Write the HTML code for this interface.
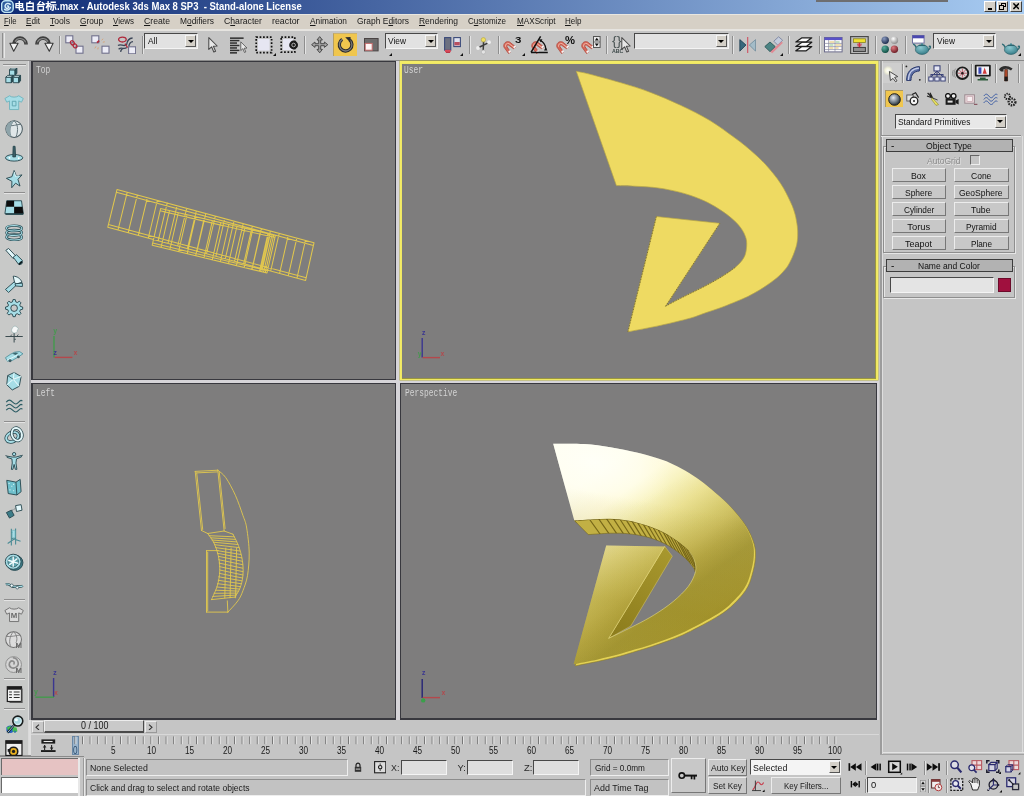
<!DOCTYPE html>
<html><head><meta charset="utf-8"><title>3ds Max</title>
<style>
html,body{margin:0;padding:0}
body{width:1024px;height:796px;position:relative;overflow:hidden;background:#c5c5c5;font-family:"Liberation Sans",sans-serif;font-size:9px;color:#111;line-height:1}
div,span,svg{position:absolute;box-sizing:border-box}
.t{white-space:nowrap;transform-origin:0 50%}
.sunk{background:#e2e2e2;border-top:1.6px solid #484848;border-left:1.6px solid #484848;border-bottom:1px solid #f4f4f4;border-right:1px solid #f4f4f4}
.btn{background:#c8c8c8;border-top:1px solid #ececec;border-left:1px solid #ececec;border-bottom:1.5px solid #777;border-right:1.5px solid #777}
.fld{background:#c2c2c2;border-top:1px solid #8c8c8c;border-left:1px solid #8c8c8c;border-bottom:1px solid #eee;border-right:1px solid #eee}
.dd{background:#d4d0c8;border-top:1px solid #f4f4f4;border-left:1px solid #f4f4f4;border-bottom:1px solid #555;border-right:1px solid #555}
.dd:after{content:"";position:absolute;left:50%;top:50%;margin-left:-3px;margin-top:-1.5px;border-left:3px solid transparent;border-right:3px solid transparent;border-top:3.5px solid #000}
.sep{width:1px;background:#8e8e8e;box-shadow:1px 0 0 #e4e4e4}
.hsep{height:1px;background:#8e8e8e;box-shadow:0 1px 0 #e4e4e4}
.vp{background:#7e7d7d}
.vl{font-family:"Liberation Mono",monospace;font-size:10px;line-height:10px;color:#d2d2d2;transform:scaleX(0.79);transform-origin:0 0}
.cb{text-align:center}
</style></head><body><div id="root" style="left:0;top:0;width:1024px;height:796px;will-change:transform;overflow:hidden">
<div class="" style="left:0px;top:0px;width:1024px;height:14px;background:linear-gradient(90deg,#0e2a74 0%,#a8ccf2 100%);"></div>
<div class="" style="left:816px;top:0px;width:132px;height:2.2px;background:#6e6e70;"></div>
<svg style="left:1px;top:0px;" width="13" height="13" viewBox="0 0 13 13"><rect x="0.6" y="0.8" width="11.6" height="11.6" rx="4" fill="#2c5a9c" stroke="#bfe4f4" stroke-width="1.5"/>
<path d="M9.2 4.3 C7.5 2.9 4.6 3.4 4.1 5.6 C3.7 7.6 5.6 8.6 7 8 C8.2 7.4 7.8 5.8 6.4 6.1 M3.6 9.3 C5.4 10.6 8.6 10.2 9.4 7.6" fill="none" stroke="#d8eefa" stroke-width="1.5" stroke-linecap="round"/></svg>
<svg style="left:15.4px;top:1.2px;" width="42" height="10" viewBox="0 0 42 10"><g fill="none" stroke="#fff" stroke-width="1.35" stroke-linecap="square">
<path d="M1 2.6H7.6V6.6H1Z M1 4.6H7.6 M4.3 0.3V8.2Q4.3 9.3 5.6 9.3H8.6V8"/>
<g transform="translate(10.6,0)"><path d="M4.6 0.2L3.6 1.9 M1.2 2.2H7.6V9.2H1.2Z M1.2 5.6H7.6"/></g>
<g transform="translate(21.2,0)"><path d="M4.2 0.2L1.6 3.6L7.8 3.3 M6.2 1.6L8.2 3.6 M1.8 5.4H7.2V9.2H1.8Z"/></g>
<g transform="translate(31,0)"><path d="M0.2 2.6H4 M2.1 0.2V9.6 M2.1 3.4L0.3 6.6 M2.3 3.8L3.8 5.6 M5.2 1.2H9.2 M4.6 3.9H9.9 M7.3 4V8.6Q7.3 9.4 6.2 9.2 M5.4 5.8L4.7 8.2 M9 5.8L9.8 8.2"/></g>
</g></svg>
<span class="t" style="left:57.00px;top:1.90px;font-size:10.2px;line-height:10.2px;height:10.2px;color:#fff;font-weight:bold;transform:scaleX(0.9308);">.max - Autodesk 3ds Max 8 SP3&nbsp; - Stand-alone License</span>
<div class="" style="left:984px;top:1px;width:11.5px;height:10.5px;background:#d4d0c8;border-top:1px solid #fff;border-left:1px solid #fff;border-bottom:1px solid #404040;border-right:1px solid #404040;"><div style="left:2.5px;top:6px;width:4.5px;height:1.6px;background:#000"></div></div>
<div class="" style="left:996.5px;top:1px;width:11.5px;height:10.5px;background:#d4d0c8;border-top:1px solid #fff;border-left:1px solid #fff;border-bottom:1px solid #404040;border-right:1px solid #404040;"><div style="left:3.6px;top:1.2px;width:4.6px;height:4.2px;border:1px solid #000;border-top-width:1.6px"></div><div style="left:1.6px;top:3.4px;width:4.6px;height:4.4px;border:1px solid #000;border-top-width:1.6px;background:#d4d0c8"></div></div>
<div class="" style="left:1010px;top:1px;width:11.5px;height:10.5px;background:#d4d0c8;border-top:1px solid #fff;border-left:1px solid #fff;border-bottom:1px solid #404040;border-right:1px solid #404040;"><svg style="left:2px;top:1.4px;" width="6.4" height="6.4" viewBox="0 0 6.4 6.4"><path d="M0.4 0.4L6 6M6 0.4L0.4 6" stroke="#000" stroke-width="1.5"/></svg></div>
<div class="" style="left:0px;top:14px;width:1024px;height:16px;background:#d6d0c6;border-top:1px solid #e8e6e0;"></div>
<div class="" style="left:0px;top:29.4px;width:1024px;height:1.2px;background:#e6e4e0;"></div>
<span class="t" style="left:4.00px;top:17.45px;font-size:9.3px;line-height:9.3px;height:9.3px;color:#1a1a1a;transform:scaleX(0.8341);"><u>F</u>ile</span>
<span class="t" style="left:26.00px;top:17.45px;font-size:9.3px;line-height:9.3px;height:9.3px;color:#1a1a1a;transform:scaleX(0.8736);"><u>E</u>dit</span>
<span class="t" style="left:50.00px;top:17.45px;font-size:9.3px;line-height:9.3px;height:9.3px;color:#1a1a1a;transform:scaleX(0.9212);"><u>T</u>ools</span>
<span class="t" style="left:80.00px;top:17.45px;font-size:9.3px;line-height:9.3px;height:9.3px;color:#1a1a1a;transform:scaleX(0.8898);"><u>G</u>roup</span>
<span class="t" style="left:113.00px;top:17.45px;font-size:9.3px;line-height:9.3px;height:9.3px;color:#1a1a1a;transform:scaleX(0.8523);"><u>V</u>iews</span>
<span class="t" style="left:144.00px;top:17.45px;font-size:9.3px;line-height:9.3px;height:9.3px;color:#1a1a1a;transform:scaleX(0.9314);"><u>C</u>reate</span>
<span class="t" style="left:180.00px;top:17.45px;font-size:9.3px;line-height:9.3px;height:9.3px;color:#1a1a1a;transform:scaleX(0.9012);">M<u>o</u>difiers</span>
<span class="t" style="left:224.00px;top:17.45px;font-size:9.3px;line-height:9.3px;height:9.3px;color:#1a1a1a;transform:scaleX(0.9306);">C<u>h</u>aracter</span>
<span class="t" style="left:272.00px;top:17.45px;font-size:9.3px;line-height:9.3px;height:9.3px;color:#1a1a1a;transform:scaleX(0.9501);">reactor</span>
<span class="t" style="left:310.00px;top:17.45px;font-size:9.3px;line-height:9.3px;height:9.3px;color:#1a1a1a;transform:scaleX(0.8947);"><u>A</u>nimation</span>
<span class="t" style="left:357.00px;top:17.45px;font-size:9.3px;line-height:9.3px;height:9.3px;color:#1a1a1a;transform:scaleX(0.9063);">Graph E<u>d</u>itors</span>
<span class="t" style="left:418.50px;top:17.45px;font-size:9.3px;line-height:9.3px;height:9.3px;color:#1a1a1a;transform:scaleX(0.9088);"><u>R</u>endering</span>
<span class="t" style="left:467.50px;top:17.45px;font-size:9.3px;line-height:9.3px;height:9.3px;color:#1a1a1a;transform:scaleX(0.8650);">C<u>u</u>stomize</span>
<span class="t" style="left:516.50px;top:17.45px;font-size:9.3px;line-height:9.3px;height:9.3px;color:#1a1a1a;transform:scaleX(0.8764);"><u>M</u>AXScript</span>
<span class="t" style="left:564.50px;top:17.45px;font-size:9.3px;line-height:9.3px;height:9.3px;color:#1a1a1a;transform:scaleX(0.8626);"><u>H</u>elp</span>
<div class="" style="left:0px;top:30.5px;width:1024px;height:29.5px;background:#c5c5c5;"></div>
<div class="" style="left:0px;top:59.6px;width:1024px;height:1.2px;background:#8a8a8a;"></div>
<div class="" style="left:2.2px;top:33px;width:1.1px;height:25px;background:#8e8e8e;"></div>
<div class="" style="left:3.7px;top:33px;width:1.1px;height:25px;background:#e8e8e8;"></div>
<div class="sep" style="left:59px;top:36px;width:1px;height:18px;"></div>
<div class="sep" style="left:141.5px;top:36px;width:1px;height:18px;"></div>
<div class="sep" style="left:304.4px;top:36px;width:1px;height:18px;"></div>
<div class="sep" style="left:468.6px;top:36px;width:1px;height:18px;"></div>
<div class="sep" style="left:498.3px;top:36px;width:1px;height:18px;"></div>
<div class="sep" style="left:606px;top:36px;width:1px;height:18px;"></div>
<div class="sep" style="left:732.4px;top:36px;width:1px;height:18px;"></div>
<div class="sep" style="left:788.4px;top:36px;width:1px;height:18px;"></div>
<div class="sep" style="left:819.2px;top:36px;width:1px;height:18px;"></div>
<div class="sep" style="left:875.2px;top:36px;width:1px;height:18px;"></div>
<div class="sep" style="left:905px;top:36px;width:1px;height:18px;"></div>
<div class="sunk" style="left:144px;top:33.2px;width:54px;height:15.6px;"></div><div class="dd" style="left:185.4px;top:35px;width:11px;height:12.2px;"></div><span class="t" style="left:147.60px;top:36.95px;font-size:9.3px;line-height:9.3px;height:9.3px;color:#111;transform:scaleX(0.9);">All</span>
<div class="sunk" style="left:384.5px;top:33.2px;width:53.5px;height:15.6px;"></div><div class="dd" style="left:425.4px;top:35px;width:11px;height:12.2px;"></div><span class="t" style="left:388.10px;top:36.95px;font-size:9.3px;line-height:9.3px;height:9.3px;color:#111;transform:scaleX(0.9);">View</span>
<div class="sunk" style="left:634px;top:33.2px;width:94.5px;height:15.6px;"></div><div class="dd" style="left:715.9px;top:35px;width:11px;height:12.2px;"></div>
<div class="sunk" style="left:933.3px;top:33.2px;width:62.5px;height:15.6px;"></div><div class="dd" style="left:983.2px;top:35px;width:11px;height:12.2px;"></div><span class="t" style="left:936.90px;top:36.95px;font-size:9.3px;line-height:9.3px;height:9.3px;color:#111;transform:scaleX(0.9);">View</span>
<svg style="left:272.6px;top:52.6px;" width="3" height="3" viewBox="0 0 3 3"><path d="M3 0V3H0Z" fill="#111"/></svg>
<svg style="left:389.1px;top:52.6px;" width="3" height="3" viewBox="0 0 3 3"><path d="M3 0V3H0Z" fill="#111"/></svg>
<svg style="left:459.6px;top:52.6px;" width="3" height="3" viewBox="0 0 3 3"><path d="M3 0V3H0Z" fill="#111"/></svg>
<svg style="left:522.1px;top:52.6px;" width="3" height="3" viewBox="0 0 3 3"><path d="M3 0V3H0Z" fill="#111"/></svg>
<svg style="left:780.1px;top:52.6px;" width="3" height="3" viewBox="0 0 3 3"><path d="M3 0V3H0Z" fill="#111"/></svg>
<svg style="left:1018.1px;top:52.6px;" width="3" height="3" viewBox="0 0 3 3"><path d="M3 0V3H0Z" fill="#111"/></svg>
<svg style="left:9px;top:35px;" width="20" height="18" viewBox="0 0 20 18"><path d="M17 8.600A6.100 6.100 0 0 0 4.900 8.400" fill="none" stroke="#3e3e3e" stroke-width="3.600"/><path d="M16.600 7.400A5.800 5.800 0 0 0 6 6.600" fill="none" stroke="#8c8c8c" stroke-width="1.200"/><path d="M0.900 8.300H9.100L4.700 16.200Z" fill="#f2f2f2" stroke="#3a3a3a" stroke-width="1.100" stroke-linejoin="round"/><path d="M15.200 8.200h3.600v1.400h-3.600z" fill="#3e3e3e"/></svg>
<svg style="left:33.8px;top:35px;" width="20" height="18" viewBox="0 0 20 18"><g transform="translate(20,0) scale(-1,1)"><path d="M17 8.600A6.100 6.100 0 0 0 4.900 8.400" fill="none" stroke="#3e3e3e" stroke-width="3.600"/><path d="M16.600 7.400A5.800 5.800 0 0 0 6 6.600" fill="none" stroke="#8c8c8c" stroke-width="1.200"/><path d="M0.900 8.300H9.100L4.700 16.200Z" fill="#f2f2f2" stroke="#3a3a3a" stroke-width="1.100" stroke-linejoin="round"/><path d="M15.200 8.200h3.600v1.400h-3.600z" fill="#3e3e3e"/></g></svg>
<svg style="left:65.4px;top:35.2px;" width="19" height="19" viewBox="0 0 19 19"><rect x="0.8" y="0.8" width="7" height="7" fill="#ececf6" stroke="#70708c" stroke-width="1.1"/><rect x="11" y="11.2" width="7" height="7" fill="#ececf6" stroke="#70708c" stroke-width="1.1"/><ellipse cx="7.4" cy="7.8" rx="1.7" ry="2.3" transform="rotate(-35 7.4 7.8)" fill="none" stroke="#b0283a" stroke-width="1.3"/><ellipse cx="10" cy="10.8" rx="1.7" ry="2.3" transform="rotate(-35 10 10.8)" fill="none" stroke="#b0283a" stroke-width="1.3"/></svg>
<svg style="left:90.8px;top:35.2px;" width="19" height="19" viewBox="0 0 19 19"><rect x="0.8" y="0.8" width="7" height="7" fill="#ececf6" stroke="#70708c" stroke-width="1.1"/><rect x="11" y="11.2" width="7" height="7" fill="#ececf6" stroke="#70708c" stroke-width="1.1"/><path d="M6 7.6 L8.2 5.6" stroke="#b0283a" stroke-width="1.6"/><path d="M10.6 5.2l1.6-1.4M11.8 7.2l2-.4M5 11.4l-1.2 2M7.2 12.4l-.4 2" stroke="#d8a070" stroke-width="0.9"/></svg>
<svg style="left:117.4px;top:35.2px;" width="19" height="19" viewBox="0 0 19 19"><path d="M1 10.6C4 8.2 6.6 12.4 9.6 9.6 M1.6 14.2C4.8 11.2 6.4 15.2 9.8 12.6 M9.6 9.6C10.2 5.2 12 3.2 15.6 3 M11.8 11.6C12.2 8.2 13.4 6.8 16 6.6 M3.6 16.8C4 14.6 5 13.6 6.6 13.4" fill="none" stroke="#3c4658" stroke-width="1.3"/><ellipse cx="5.4" cy="4.6" rx="3.8" ry="2.4" fill="none" stroke="#b0283a" stroke-width="1.3"/><path d="M8 8.6l2.6 4" stroke="#b0283a" stroke-width="1.2"/><rect x="11.6" y="11.8" width="7" height="7" fill="#ececf6" stroke="#70708c" stroke-width="1.1"/></svg>
<svg style="left:207.6px;top:37px;" width="10.5" height="16.5" viewBox="0 0 10.5 16.5"><path d="M0.8 0.6 L0.8 12.4 L3.6 9.8 L5.8 15 L7.6 14.2 L5.4 9.2 L9.2 9 Z" fill="#e8e8e8" stroke="#4a4a4a" stroke-width="1.05" stroke-linejoin="round"/></svg>
<svg style="left:229.6px;top:37px;" width="17.5" height="17.5" viewBox="0 0 17.5 17.5"><rect x="0" y="0.4" width="13.6" height="1.5" fill="#2e2e2e"/><rect x="0" y="2.85" width="9.4" height="1.5" fill="#2e2e2e"/><rect x="0" y="5.3" width="7" height="1.5" fill="#2e2e2e"/><rect x="0" y="7.75" width="9.4" height="1.5" fill="#2e2e2e"/><rect x="0" y="10.2" width="7" height="1.5" fill="#2e2e2e"/><rect x="0" y="12.65" width="9.4" height="1.5" fill="#2e2e2e"/><rect x="0" y="15.1" width="7" height="1.5" fill="#2e2e2e"/><g transform="translate(10.2,4.4) scale(0.74)"><path d="M0.8 0.6 L0.8 12.4 L3.6 9.8 L5.8 15 L7.6 14.2 L5.4 9.2 L9.2 9 Z" fill="#e8e8e8" stroke="#4a4a4a" stroke-width="1.05" stroke-linejoin="round"/></g></svg>
<svg style="left:254.6px;top:35.6px;" width="18.5" height="18.5" viewBox="0 0 18.5 18.5"><rect x="3" y="3" width="11.6" height="11.6" fill="#e6e6f2"/><rect x="1.2" y="1.2" width="15.4" height="15.4" fill="none" stroke="#111" stroke-width="1.7" stroke-dasharray="1.7 1.72"/></svg>
<svg style="left:280.4px;top:36.2px;" width="19" height="18" viewBox="0 0 19 18"><rect x="3" y="3" width="10" height="11" fill="#e6e6f2"/><rect x="1.2" y="1.2" width="13.6" height="15" fill="none" stroke="#111" stroke-width="1.7" stroke-dasharray="1.7 1.72"/><circle cx="13.6" cy="9" r="4.4" fill="#1a1a1a"/><circle cx="13.6" cy="9" r="1.8" fill="none" stroke="#bbb" stroke-width="0.9"/></svg>
<svg style="left:311px;top:36px;" width="17.4" height="17.4" viewBox="0 0 17.4 17.4"><path d="M8.7 0.6L11.4 4H9.7V7.7H13.4V6L16.8 8.7L13.4 11.4V9.7H9.7V13.4H11.4L8.7 16.8L6 13.4H7.7V9.7H4V11.4L0.6 8.7L4 6V7.7H7.7V4H6Z" fill="#a4a4a4" stroke="#4a4a4a" stroke-width="1" stroke-linejoin="round"/></svg>
<div class="" style="left:333px;top:33.4px;width:24px;height:22.6px;background:#f0c64e;border-left:1px solid #b8a060;border-top:1px solid #c8b070;"></div>
<svg style="left:336.6px;top:36.4px;" width="17" height="17" viewBox="0 0 17 17"><path d="M5.2 3.4 A6.3 6.3 0 1 0 12.6 3.8" fill="none" stroke="#2c2c2c" stroke-width="3.3"/><path d="M5.2 3.4 A6.3 6.3 0 1 0 12.6 3.8" fill="none" stroke="#7a7a7a" stroke-width="1.3"/><path d="M8.2 1.2L13.6 1L13.4 6.6Z" fill="#2c2c2c"/></svg>
<svg style="left:363.6px;top:38px;" width="15" height="13.6" viewBox="0 0 15 13.6"><rect x="0.5" y="0.5" width="13.6" height="12.4" fill="#6e6c6c" stroke="#4a4444" stroke-width="1"/><rect x="1.2" y="5.4" width="7" height="6.8" fill="#fdf4f4" stroke="#c46a6a" stroke-width="1"/></svg>
<svg style="left:444.2px;top:37px;" width="17.6" height="16.6" viewBox="0 0 17.6 16.6"><rect x="0.6" y="0.6" width="6.2" height="12.6" fill="#6c7080" stroke="#3a4a7a" stroke-width="1.1"/><rect x="9.8" y="0.6" width="6.6" height="9" fill="#dfe2ee" stroke="#3a4a7a" stroke-width="1.1"/><rect x="10.4" y="5" width="5.4" height="3.4" fill="#b85060"/><path d="M1 12.8h5.8v2.4h-5.8z" fill="#d84a5a"/><path d="M2 15.4h4" stroke="#b83848" stroke-width="1.2"/></svg>
<svg style="left:475.6px;top:36.6px;" width="15.6" height="18" viewBox="0 0 15.6 18"><path d="M7.6 3.6L7.2 14 M1.6 11L13.2 5.4" stroke="#3c3c3c" stroke-width="1.5"/><circle cx="7.4" cy="2.8" r="2.2" fill="#f0e060" stroke="#b0a040" stroke-width="0.6"/><circle cx="13" cy="5.2" r="1.9" fill="#eee"/><circle cx="2" cy="11" r="1.9" fill="#eee"/><circle cx="7.4" cy="15" r="2.1" fill="#e4e4e4" stroke="#aaa" stroke-width="0.5"/></svg>
<svg style="left:503.4px;top:40px;" width="14" height="14.4" viewBox="0 0 14 14.4"><path d="M1 7.2 C-0.2 3.4 3.2 0.6 6.6 2 L12.6 6.8 L10.6 8.8 L5.6 5.2 C4.2 4.6 3.4 5.6 4 6.8 L7.6 12 L5.6 13.6 Z" fill="#d8685a" stroke="#b04a3e" stroke-width="0.8" stroke-linejoin="round"/><path d="M2.6 6.8C2 4.2 4 2.8 6 3.6L11.4 7.8" fill="none" stroke="#f0b4a4" stroke-width="1"/><path d="M5.2 11.6l1.9-1.5 1 1.5-2 1.6zM10.2 7l1.9-1.8 1 1.2-2 2z" fill="#f4f4f4"/></svg>
<span class="t" style="left:515.00px;top:35.05px;font-size:9.5px;line-height:9.5px;height:9.5px;color:#111;font-weight:bold;transform:scaleX(1.2113);">3</span>
<svg style="left:531px;top:40px;" width="14" height="14.4" viewBox="0 0 14 14.4"><path d="M1 7.2 C-0.2 3.4 3.2 0.6 6.6 2 L12.6 6.8 L10.6 8.8 L5.6 5.2 C4.2 4.6 3.4 5.6 4 6.8 L7.6 12 L5.6 13.6 Z" fill="#d8685a" stroke="#b04a3e" stroke-width="0.8" stroke-linejoin="round"/><path d="M2.6 6.8C2 4.2 4 2.8 6 3.6L11.4 7.8" fill="none" stroke="#f0b4a4" stroke-width="1"/><path d="M5.2 11.6l1.9-1.5 1 1.5-2 1.6zM10.2 7l1.9-1.8 1 1.2-2 2z" fill="#f4f4f4"/></svg>
<svg style="left:529.4px;top:35.4px;" width="20" height="19" viewBox="0 0 20 19"><path d="M2 17.4H18.8 M2 17.4L11.6 1.4" stroke="#111" stroke-width="1.5" fill="none"/><path d="M11 5.4C14.6 7 16.6 10.4 16.8 14" fill="none" stroke="#111" stroke-width="1.2"/><path d="M9.6 4.4l3.8-.2-1.4 3zM15 15.6l3.4-.2-1.6-3.2z" fill="#111"/></svg>
<svg style="left:555.6px;top:40px;" width="14" height="14.4" viewBox="0 0 14 14.4"><path d="M1 7.2 C-0.2 3.4 3.2 0.6 6.6 2 L12.6 6.8 L10.6 8.8 L5.6 5.2 C4.2 4.6 3.4 5.6 4 6.8 L7.6 12 L5.6 13.6 Z" fill="#d8685a" stroke="#b04a3e" stroke-width="0.8" stroke-linejoin="round"/><path d="M2.6 6.8C2 4.2 4 2.8 6 3.6L11.4 7.8" fill="none" stroke="#f0b4a4" stroke-width="1"/><path d="M5.2 11.6l1.9-1.5 1 1.5-2 1.6zM10.2 7l1.9-1.8 1 1.2-2 2z" fill="#f4f4f4"/></svg>
<span class="t" style="left:565.00px;top:34.75px;font-size:10.5px;line-height:10.5px;height:10.5px;color:#111;font-weight:bold;transform:scaleX(1.0711);">%</span>
<svg style="left:581px;top:40px;" width="14" height="14.4" viewBox="0 0 14 14.4"><path d="M1 7.2 C-0.2 3.4 3.2 0.6 6.6 2 L12.6 6.8 L10.6 8.8 L5.6 5.2 C4.2 4.6 3.4 5.6 4 6.8 L7.6 12 L5.6 13.6 Z" fill="#d8685a" stroke="#b04a3e" stroke-width="0.8" stroke-linejoin="round"/><path d="M2.6 6.8C2 4.2 4 2.8 6 3.6L11.4 7.8" fill="none" stroke="#f0b4a4" stroke-width="1"/><path d="M5.2 11.6l1.9-1.5 1 1.5-2 1.6zM10.2 7l1.9-1.8 1 1.2-2 2z" fill="#f4f4f4"/></svg>
<svg style="left:592.6px;top:35.6px;" width="8" height="12.4" viewBox="0 0 8 12.4"><rect x="0.5" y="0.5" width="6.6" height="11" fill="#e8e8e8" stroke="#555" stroke-width="1"/><path d="M0.5 6H7" stroke="#555" stroke-width="0.9"/><path d="M1.8 4.4L3.8 1.8L5.8 4.4ZM1.8 7.6L3.8 10.2L5.8 7.6Z" fill="#111"/></svg>
<span class="t" style="left:611.80px;top:35.20px;font-size:12px;line-height:12px;height:12px;color:#4c5656;transform:scaleX(1.1977);">{}</span>
<span class="t" style="left:611.60px;top:49.00px;font-size:5.6px;line-height:5.6px;height:5.6px;color:#3c4848;font-weight:bold;transform:scaleX(0.9396);">ABC</span>
<svg style="left:621.4px;top:36.6px;" width="10.5" height="16.5" viewBox="0 0 10.5 16.5"><path d="M0.8 0.6 L0.8 12.4 L3.6 9.8 L5.8 15 L7.6 14.2 L5.4 9.2 L9.2 9 Z" fill="#e8e8e8" stroke="#4a4a4a" stroke-width="1.05" stroke-linejoin="round"/></svg>
<svg style="left:739px;top:37px;" width="17.4" height="16.4" viewBox="0 0 17.4 16.4"><path d="M0.8 2.6L7 8L0.8 14.2Z" fill="#38687c" stroke="#1e3e50" stroke-width="0.8"/><path d="M16.6 2.6L10.4 8L16.6 14.2Z" fill="#a4bcc8" stroke="#6e8a9a" stroke-width="0.8"/><path d="M8.7 0V16.4" stroke="#d05060" stroke-width="1.1"/></svg>
<svg style="left:764.4px;top:35.6px;" width="19.4" height="18.6" viewBox="0 0 19.4 18.6"><path d="M9.8 5.2L14.6 0.8L18.6 4.2L13.8 9.2Z" fill="#c4ccdc" stroke="#7c84a0" stroke-width="0.9"/><path d="M9.4 12.4L17.8 5.6L18.8 7L8.2 17.2L6 15.6Z" fill="#e08a94"/><path d="M0.8 10.6L6 6L11.2 10.6L6 15.6Z" fill="#4c8484" stroke="#2c5858" stroke-width="0.9"/></svg>
<svg style="left:795.2px;top:37px;" width="18" height="15.4" viewBox="0 0 18 15.4"><path d="M0.8 13.8L7 9.6H16.8L11.2 13.8H4.6Z" fill="#fbfbfb" stroke="#1c1c1c" stroke-width="1.25" stroke-linejoin="round"/><path d="M0.8 9.4L7 5.2H16.8L11.2 9.4H4.6Z" fill="#fbfbfb" stroke="#1c1c1c" stroke-width="1.25" stroke-linejoin="round"/><path d="M0.8 5L7 0.8H16.8L11.2 5H4.6Z" fill="#fbfbfb" stroke="#1c1c1c" stroke-width="1.25" stroke-linejoin="round"/></svg>
<svg style="left:824px;top:37.4px;" width="18.6" height="15.4" viewBox="0 0 18.6 15.4"><rect x="0.5" y="0.5" width="17.6" height="14.4" fill="#fff" stroke="#6a6a8a" stroke-width="1"/><rect x="0.5" y="0.5" width="17.6" height="2.6" fill="#5a52c8"/><path d="M4.6 3V15M0.5 6.4H18M0.5 9.6H18M0.5 12.6H18M11 3V15" stroke="#8a8aa0" stroke-width="0.7"/><path d="M5.4 5h5M11.6 8h5.6M5.4 11h4M11.6 11h3" stroke="#e4c060" stroke-width="1.1"/><path d="M5.4 8h4M11.6 5h4" stroke="#88c488" stroke-width="1.1"/></svg>
<svg style="left:850.4px;top:36px;" width="19" height="18.4" viewBox="0 0 19 18.4"><rect x="0.6" y="0.6" width="17.6" height="17" fill="#c0c0c0" stroke="#4a4a4a" stroke-width="1.2"/><rect x="3.4" y="2.8" width="12" height="3.6" fill="#f0e030" stroke="#8a8420" stroke-width="0.8"/><rect x="3.4" y="11.4" width="12" height="4.2" fill="#8e8e8e" stroke="#333" stroke-width="0.9"/><path d="M9.4 6.6V11.2" stroke="#d03040" stroke-width="1.3"/><path d="M7 8.2h4.8M7.4 9.8h4" stroke="#d03040" stroke-width="0.9"/></svg>
<svg style="left:881px;top:36.4px;" width="18.6" height="17.6" viewBox="0 0 18.6 17.6"><radialGradient id="g4242" cx="35%" cy="30%" r="75%"><stop offset="0" stop-color="#8a9ac0"/><stop offset="1" stop-color="#1c2a4a"/></radialGradient><circle cx="4.2" cy="4.2" r="3.7" fill="url(#g4242)"/><radialGradient id="g13442" cx="35%" cy="30%" r="75%"><stop offset="0" stop-color="#ffffff"/><stop offset="1" stop-color="#8a8a8a"/></radialGradient><circle cx="13.4" cy="4.2" r="3.7" fill="url(#g13442)"/><radialGradient id="g42132" cx="35%" cy="30%" r="75%"><stop offset="0" stop-color="#5ab0a0"/><stop offset="1" stop-color="#0e4a40"/></radialGradient><circle cx="4.2" cy="13.2" r="3.7" fill="url(#g42132)"/><radialGradient id="g134132" cx="35%" cy="30%" r="75%"><stop offset="0" stop-color="#e07a80"/><stop offset="1" stop-color="#6a1c24"/></radialGradient><circle cx="13.4" cy="13.2" r="3.7" fill="url(#g134132)"/></svg>
<svg style="left:911.6px;top:34.6px;" width="13" height="9" viewBox="0 0 13 9"><rect x="0.5" y="0.5" width="11.6" height="7.6" fill="#fff" stroke="#7070a0" stroke-width="1"/><rect x="0.5" y="0.5" width="11.6" height="2.8" fill="#4a48b0"/></svg>
<svg style="left:911.6px;top:42.6px;" width="20" height="12" viewBox="0 0 20 12"><radialGradient id="tpg" cx="40%" cy="30%" r="80%"><stop offset="0" stop-color="#8cc8d0"/><stop offset="1" stop-color="#2c7480"/></radialGradient><path d="M1 1.4C2.4 1 3.4 2.6 4.4 4.6 M16.8 3.6C18.8 2 19.4 5.6 15.6 7.4" fill="none" stroke="#2c6a74" stroke-width="1.5"/><ellipse cx="10" cy="6.6" rx="6.6" ry="4.8" fill="url(#tpg)" stroke="#2a5e68" stroke-width="0.7"/><path d="M6.8 2.4H13.2" stroke="#2a5e68" stroke-width="1"/><circle cx="10" cy="1.2" r="1" fill="#3c8490"/></svg>
<svg style="left:1001px;top:42.6px;" width="20" height="12" viewBox="0 0 20 12"><radialGradient id="tpg" cx="40%" cy="30%" r="80%"><stop offset="0" stop-color="#8cc8d0"/><stop offset="1" stop-color="#2c7480"/></radialGradient><path d="M1 1.4C2.4 1 3.4 2.6 4.4 4.6 M16.8 3.6C18.8 2 19.4 5.6 15.6 7.4" fill="none" stroke="#2c6a74" stroke-width="1.5"/><ellipse cx="10" cy="6.6" rx="6.6" ry="4.8" fill="url(#tpg)" stroke="#2a5e68" stroke-width="0.7"/><path d="M6.8 2.4H13.2" stroke="#2a5e68" stroke-width="1"/><circle cx="10" cy="1.2" r="1" fill="#3c8490"/></svg>
<div class="" style="left:0px;top:60.8px;width:29.2px;height:695px;background:#c8c9c8;border-right:1.4px solid #dadada;"></div>
<div class="" style="left:29.2px;top:60.8px;width:1.9px;height:659.6px;background:#a2a2a6;"></div>
<div class="" style="left:29.2px;top:720.4px;width:1.6px;height:35.4px;background:#dedede;"></div>
<div class="" style="left:0px;top:755.2px;width:30.8px;height:1.2px;background:#909090;"></div>
<div class="hsep" style="left:3px;top:64px;width:23px;height:1px;"></div>
<div class="hsep" style="left:4px;top:192.4px;width:21px;height:1px;"></div>
<div class="hsep" style="left:4px;top:420.6px;width:21px;height:1px;"></div>
<div class="hsep" style="left:4px;top:599px;width:21px;height:1px;"></div>
<div class="hsep" style="left:4px;top:678.4px;width:21px;height:1px;"></div>
<div class="hsep" style="left:4px;top:708px;width:21px;height:1px;"></div>
<svg style="left:4.08px;top:68.28px;" width="20.24" height="20.24" viewBox="0 0 22 22"><path d="M6 2h6v6h-6z" fill="#a6dde6" stroke="#27474e" stroke-width="1" stroke-linejoin="round"/><path d="M6 2l2-2h6l-2 2z" fill="#e4f8fb" stroke="#27474e" stroke-width="1" stroke-linejoin="round"/><path d="M12 2l2-2v6l-2 2z" fill="#2c5058" stroke="#27474e" stroke-width="1" stroke-linejoin="round"/><path d="M2 10h6v6h-6z" fill="#a6dde6" stroke="#27474e" stroke-width="1" stroke-linejoin="round"/><path d="M2 10l2-2h6l-2 2z" fill="#e4f8fb" stroke="#27474e" stroke-width="1" stroke-linejoin="round"/><path d="M8 10l2-2v6l-2 2z" fill="#2c5058" stroke="#27474e" stroke-width="1" stroke-linejoin="round"/><path d="M10 10h6v6h-6z" fill="#a6dde6" stroke="#27474e" stroke-width="1" stroke-linejoin="round"/><path d="M10 10l2-2h6l-2 2z" fill="#e4f8fb" stroke="#27474e" stroke-width="1" stroke-linejoin="round"/><path d="M16 10l2-2v6l-2 2z" fill="#2c5058" stroke="#27474e" stroke-width="1" stroke-linejoin="round"/></svg>
<svg style="left:4.08px;top:93.48px;" width="20.24" height="20.24" viewBox="0 0 22 22"><path d="M6 3L1 6L3 10L6 8.6V18H16V8.6L19 10L21 6L16 3C14 5 8 5 6 3Z" fill="#a6dde6" stroke="#6fb4be" stroke-width="1" stroke-linejoin="round"/><path d="M9 9h4v5h-4z" fill="none" stroke="#5fa4ae" stroke-width="1"/></svg>
<svg style="left:4.08px;top:118.88px;" width="20.24" height="20.24" viewBox="0 0 22 22"><circle cx="11" cy="11" r="9" fill="#dfe6e8" stroke="#4a5a60" stroke-width="1.1"/><path d="M11 2C6 6 5 15 8 19.4M11 2C15 5 16 12 13 19.8M3 7.5C8 8 15 6 18.4 5.6" fill="none" stroke="#5a6c72" stroke-width="1"/><path d="M11 2C7 6 5.4 14 8 19.4C4 18 2 14 2.2 10.6C2.4 6 6 2.6 11 2Z" fill="#8ea4aa"/></svg>
<svg style="left:4.08px;top:143.88px;" width="20.24" height="20.24" viewBox="0 0 22 22"><ellipse cx="11" cy="15" rx="9.4" ry="3.6" fill="#a6dde6" stroke="#27474e" stroke-width="1" stroke-linejoin="round"/><path d="M10 2.5L12 2.5L12.6 14L9.6 14Z" fill="#3c6068" stroke="#27474e" stroke-width="1" stroke-linejoin="round"/><circle cx="6" cy="15" r="1" fill="#fff"/><circle cx="16" cy="15.4" r="1" fill="#fff"/></svg>
<svg style="left:4.08px;top:168.88px;" width="20.24" height="20.24" viewBox="0 0 22 22"><path d="M11 1.6L13.4 7.6L19.6 6.4L15.2 11.2L17.4 18.6L12.6 15.4L8.4 20.4L8.6 13.4L2.6 10.2L8.6 8.4Z" fill="#a6dde6" stroke="#27474e" stroke-width="1" stroke-linejoin="round"/><path d="M11 3l1.6 5 4-.6" fill="none" stroke="#e4f8fb" stroke-width="1"/></svg>
<svg style="left:4.08px;top:197.88px;" width="20.24" height="20.24" viewBox="0 0 22 22"><path d="M3 3H19L21 17H1Z" fill="#a6dde6" stroke="#27474e" stroke-width="1" stroke-linejoin="round"/><path d="M3 3H11L11 9.4H2.2ZM11 9.4H20L21 17H11Z" fill="#0c0c0c"/><path d="M1.6 17.6H21" stroke="#27474e" stroke-width="1.6"/></svg>
<svg style="left:4.08px;top:222.88px;" width="20.24" height="20.24" viewBox="0 0 22 22"><ellipse cx="11" cy="15.4" rx="8.4" ry="3" fill="none" stroke="#2c5058" stroke-width="2.6"/><ellipse cx="11" cy="15.4" rx="8.4" ry="3" fill="none" stroke="#a6dde6" stroke-width="1.1"/><ellipse cx="11" cy="10.6" rx="8.4" ry="3" fill="none" stroke="#2c5058" stroke-width="2.6"/><ellipse cx="11" cy="10.6" rx="8.4" ry="3" fill="none" stroke="#a6dde6" stroke-width="1.1"/><ellipse cx="11" cy="5.8" rx="8.4" ry="3" fill="none" stroke="#2c5058" stroke-width="2.6"/><ellipse cx="11" cy="5.8" rx="8.4" ry="3" fill="none" stroke="#a6dde6" stroke-width="1.1"/></svg>
<svg style="left:4.08px;top:247.28px;" width="20.24" height="20.24" viewBox="0 0 22 22"><path d="M2 3.6L5 1.6L13 10L10 12.6Z" fill="#e4f8fb" stroke="#27474e" stroke-width="1" stroke-linejoin="round"/><path d="M10 11L13.6 8.4L20 14.6L19.4 18.4L16 19Z" fill="#a6dde6" stroke="#27474e" stroke-width="1" stroke-linejoin="round"/><path d="M16.2 19L19.6 15.8" stroke="#0c1c20" stroke-width="2"/></svg>
<svg style="left:4.08px;top:273.88px;" width="20.24" height="20.24" viewBox="0 0 22 22"><path d="M10 2.4C14.4 2.4 18 5 19.6 9L12 11.4Z" fill="#e4f8fb" stroke="#27474e" stroke-width="1" stroke-linejoin="round"/><path d="M11 8.6L14 11.6L5 20L1.6 16.8Z" fill="#a6dde6" stroke="#27474e" stroke-width="1" stroke-linejoin="round"/><path d="M12 10.6L20 10V13.6L12.6 13Z" fill="#a6dde6" stroke="#27474e" stroke-width="1" stroke-linejoin="round"/></svg>
<svg style="left:4.08px;top:297.88px;" width="20.24" height="20.24" viewBox="0 0 22 22"><path d="M20.3 9.8 L20.3 12.2 L17.8 12.8 L17.1 14.5 L18.5 16.7 L16.7 18.5 L14.5 17.1 L12.8 17.8 L12.2 20.3 L9.8 20.3 L9.2 17.8 L7.5 17.1 L5.3 18.5 L3.5 16.7 L4.9 14.5 L4.2 12.8 L1.7 12.2 L1.7 9.8 L4.2 9.2 L4.9 7.5 L3.5 5.3 L5.3 3.5 L7.5 4.9 L9.2 4.2 L9.8 1.7 L12.2 1.7 L12.8 4.2 L14.5 4.9 L16.7 3.5 L18.5 5.3 L17.1 7.5 L17.8 9.2 Z" fill="#a6dde6" stroke="#27474e" stroke-width="1" stroke-linejoin="round"/><circle cx="11" cy="11" r="3.6" fill="#c8c8c8" stroke="#27474e" stroke-width="1" stroke-linejoin="round"/></svg>
<svg style="left:4.08px;top:323.88px;" width="20.24" height="20.24" viewBox="0 0 22 22"><path d="M1.6 13.6H20.4M11 8V20" stroke="#3c4c50" stroke-width="1.1"/><path d="M7 13.4l1.6-2M14 13.4l1.6-2M11 16.6h2" stroke="#3c4c50" stroke-width="0.9"/><path d="M9 4.6C10.4 1.4 13.6 2 14.6 4C16 4.4 16 6 14.6 6.4C15 9 12.4 10.6 10 9.6C8 9 7.8 6 9 4.6Z" fill="#f6f8f8" stroke="#8aa" stroke-width="0.6"/></svg>
<svg style="left:4.08px;top:347.48px;" width="20.24" height="20.24" viewBox="0 0 22 22"><path d="M1.6 11.6L7 8L11.6 5.6L17 5L20.6 7.4L16 10.6L9 14.6L3.6 15.4Z" fill="#a6dde6" stroke="#4c8c96" stroke-width="0.9"/><path d="M9 7.4L12 6L15.6 6.4L12.6 8.6Z" fill="#3c6870"/><path d="M3 14.6L15 8.6" stroke="#e4f8fb" stroke-width="1"/><circle cx="6.6" cy="15" r="1.6" fill="#3c5c64"/><circle cx="15.6" cy="10.8" r="1.5" fill="#3c5c64"/></svg>
<svg style="left:4.08px;top:370.88px;" width="20.24" height="20.24" viewBox="0 0 22 22"><path d="M4 5L11 1.6L18.6 6L16.6 16.6L9 20.6L3 15Z" fill="#a6dde6" stroke="#27474e" stroke-width="1" stroke-linejoin="round"/><path d="M11 1.6L10 9L3 15M10 9L16.6 16.6M10 9L18.6 6" fill="none" stroke="#e4f8fb" stroke-width="1.1"/><path d="M4 5L10 9" stroke="#27474e" stroke-width="0.8"/></svg>
<svg style="left:4.08px;top:395.88px;" width="20.24" height="20.24" viewBox="0 0 22 22"><path d="M2.4 6.6C5 3.8 6.6 3.8 9.4 6.6S13.6 9.2 16 6.6S19 4.6 20 5.6" fill="none" stroke="#2c5c64" stroke-width="1.2"/><path d="M2.4 11C5 8.2 6.6 8.2 9.4 11S13.6 13.6 16 11S19 9 20 10" fill="none" stroke="#2c5c64" stroke-width="1.2"/><path d="M2.4 15.4C5 12.6 6.6 12.6 9.4 15.4S13.6 18 16 15.4S19 13.4 20 14.4" fill="none" stroke="#2c5c64" stroke-width="1.2"/></svg>
<svg style="left:4.08px;top:425.88px;" width="20.24" height="20.24" viewBox="0 0 22 22"><ellipse cx="9" cy="12" rx="7" ry="5" transform="rotate(-25 9 12)" fill="none" stroke="#27474e" stroke-width="3.6"/><ellipse cx="9" cy="12" rx="7" ry="5" transform="rotate(-25 9 12)" fill="none" stroke="#a6dde6" stroke-width="2"/><ellipse cx="14" cy="9" rx="5.4" ry="7" transform="rotate(-20 14 9)" fill="none" stroke="#27474e" stroke-width="3.6"/><ellipse cx="14" cy="9" rx="5.4" ry="7" transform="rotate(-20 14 9)" fill="none" stroke="#e4f8fb" stroke-width="2"/></svg>
<svg style="left:4.08px;top:451.48px;" width="20.24" height="20.24" viewBox="0 0 22 22"><circle cx="11" cy="3.4" r="1.8" fill="#a6dde6" stroke="#27474e" stroke-width="1" stroke-linejoin="round"/><path d="M3.6 5.6L9 6.6H13L18.6 5L19 6.4L13.6 8.6L13 13L14 20H12.4L11 14.6L9.6 20H8L9 13L8.6 8.6L3.4 7Z" fill="#a6dde6" stroke="#27474e" stroke-width="1" stroke-linejoin="round"/><path d="M1.6 5l2 .6M20.400 4.600l-1.800 .6" stroke="#27474e" stroke-width="1"/></svg>
<svg style="left:4.08px;top:476.88px;" width="20.24" height="20.24" viewBox="0 0 22 22"><path d="M3 3.6L13 5.6L17.600 2.600L18.600 16L14 19.600L4.600 18Z" fill="#6fc0cc" stroke="#27474e" stroke-width="1" stroke-linejoin="round"/><path d="M13 5.6L14 19.6" stroke="#27474e" stroke-width="1"/><path d="M5 7l1 0M8 10l1 0M6 14l1 0M10 15l1 0M10 8l1 0" stroke="#e4f8fb" stroke-width="1.2"/></svg>
<svg style="left:4.08px;top:501.48px;" width="20.24" height="20.24" viewBox="0 0 22 22"><path d="M12.600 5L18.600 4L19.600 10L13.600 11.400Z" fill="#e4f8fb" stroke="#27474e" stroke-width="1" stroke-linejoin="round"/><path d="M2.600 12.600L8 10L11 15.600L6 18.600Z" fill="#3c7c88" stroke="#27474e" stroke-width="1" stroke-linejoin="round"/><path d="M8.6 10.400L12.600 8" stroke="#27474e" stroke-width="0.8" stroke-dasharray="1.2 1"/></svg>
<svg style="left:4.08px;top:526.88px;" width="20.24" height="20.24" viewBox="0 0 22 22"><path d="M8 2V20M12.600 1.600V19M8 6H13M7.600 12L18 15.600M4 18L12.600 12" fill="none" stroke="#4c8c96" stroke-width="1.2"/><path d="M9 3.600h3v8h-3z" fill="#a6dde6" stroke="#6fb4be" stroke-width="0.7"/></svg>
<svg style="left:4.08px;top:551.88px;" width="20.24" height="20.24" viewBox="0 0 22 22"><ellipse cx="11.600" cy="11.600" rx="9" ry="8.400" fill="#3c7c88" stroke="#27474e" stroke-width="1" stroke-linejoin="round"/><ellipse cx="10" cy="10.600" rx="8.600" ry="8.200" fill="#a6dde6" stroke="#27474e" stroke-width="1" stroke-linejoin="round"/><ellipse cx="10" cy="10.600" rx="5.800" ry="5.600" fill="#5fa4ae" stroke="#27474e" stroke-width="0.7"/><path d="M10 5V16M4.600 9L15.600 12.400M5.600 14L14.600 7" stroke="#f4fcfd" stroke-width="1.5"/></svg>
<svg style="left:4.08px;top:576.28px;" width="20.24" height="20.24" viewBox="0 0 22 22"><path d="M2 9C6 7.600 8 12.600 12 11.600S18 12.400 20.400 10.600" fill="none" stroke="#27474e" stroke-width="2.600"/><path d="M2 9C6 7.600 8 12.600 12 11.600S18 12.400 20.400 10.600" fill="none" stroke="#a6dde6" stroke-width="1.100"/><circle cx="8.400" cy="10.400" r="1.700" fill="#f4fcfd" stroke="#27474e" stroke-width="0.7"/><circle cx="14.400" cy="12.600" r="1.500" fill="#f4fcfd" stroke="#27474e" stroke-width="0.7"/></svg>
<svg style="left:4.08px;top:604.88px;" width="20.24" height="20.24" viewBox="0 0 22 22"><path d="M6 3L1 6L3 10L6 8.6V18H16V8.6L19 10L21 6L16 3C14 5 8 5 6 3Z" fill="#dadada" stroke="#6e6e6e" stroke-width="1" stroke-linejoin="round"/><text x="7.4" y="14.4" font-family="Liberation Sans" font-weight="bold" font-size="8.500" fill="#6a6a6a">M</text></svg>
<svg style="left:4.08px;top:630.48px;" width="20.24" height="20.24" viewBox="0 0 22 22"><circle cx="10.400" cy="10.400" r="8.600" fill="#dcdcdc" stroke="#707070" stroke-width="1.100"/><path d="M10.400 1.800C6 6 5 14 7.600 18.600M10.400 1.800C14 5 15 10 13 14M2.600 7C7 7.600 14 6 17.600 5.400" fill="none" stroke="#808080" stroke-width="1"/><text x="12.4" y="20" font-family="Liberation Sans" font-weight="bold" font-size="8.500" fill="#6a6a6a">M</text></svg>
<svg style="left:4.08px;top:654.88px;" width="20.24" height="20.24" viewBox="0 0 22 22"><circle cx="10.400" cy="10.400" r="8.600" fill="#d4d4d4" stroke="#8a8a8a" stroke-width="1"/><path d="M10.400 10.400C13 7 8 4.600 6 8.600C4.400 13 9.600 16 13.600 13C17.600 9.600 14.600 3 9.600 3" fill="none" stroke="#8a8a8a" stroke-width="1.700"/><text x="12.4" y="20" font-family="Liberation Sans" font-weight="bold" font-size="8.500" fill="#6a6a6a">M</text></svg>
<svg style="left:4.08px;top:684.48px;" width="20.24" height="20.24" viewBox="0 0 22 22"><rect x="3.600" y="3" width="15.400" height="16" fill="#f4f4f4" stroke="#1c1c1c" stroke-width="1.300"/><rect x="3.600" y="3" width="15.400" height="3.200" fill="#1c1c1c"/><path d="M5.600 8.600h3M5.600 11.600h3M5.600 14.600h3M10.600 8.600h6.400M10.600 11.600h6.400M10.600 14.600h6.400" stroke="#2c2c2c" stroke-width="1.100"/><path d="M19.600 5V20H6" fill="none" stroke="#5a5a5a" stroke-width="1.300"/></svg>
<svg style="left:4.08px;top:715.48px;" width="20.24" height="20.24" viewBox="0 0 22 22"><path d="M2.600 13.600C4 11 8 10.600 9.600 12.600L11 17.600C8 20.600 4 20 2.600 17Z" fill="#2c62c0"/><path d="M3 13.600l4-2 .6 3.400-3 2.400z" fill="#44c050"/><path d="M9.600 13l4 .6 1 4-3 1.800-2.400-2z" fill="#44c050"/><path d="M11 16.600l2.600 1.600-2 1.400z" fill="#2c62c0"/><path d="M3.600 19.400L11.600 10.400" stroke="#14242c" stroke-width="2.400"/><path d="M3.800 19.200L11.400 10.600" stroke="#b4d8e8" stroke-width="0.900"/><circle cx="15" cy="6.600" r="5.400" fill="#cfeaf0" stroke="#181c1c" stroke-width="1.700"/><circle cx="14.600" cy="6.200" r="3.400" fill="#a8d4dc"/><circle cx="13.400" cy="5.200" r="1.700" fill="#f4fcfc"/></svg>
<div style="left:0;top:737px;width:29px;height:18.800px;overflow:hidden"><svg style="left:4px;top:0.6px;" width="20.2" height="20.2" viewBox="0 0 22 22"><rect x="2" y="3" width="17.600" height="16" fill="#f0f0f0" stroke="#1c1c1c" stroke-width="1.300"/><rect x="2" y="3" width="17.600" height="3.400" fill="#1c1c1c"/><circle cx="10.400" cy="14.600" r="4.600" fill="#e8b020" stroke="#1c1c1c" stroke-width="1.700"/><circle cx="10.400" cy="14.600" r="1.800" fill="#1c1c1c"/><path d="M4 12h3v3h-3z" fill="#1c1c1c"/></svg></div>
<div class="" style="left:31px;top:60.8px;width:850px;height:660px;background:#d6d4d8;"></div>
<div class="" style="left:31.4px;top:60.6px;width:364.8px;height:319.6px;background:#38383e;"></div><div class="vp" style="left:32.7px;top:61.9px;width:362.2px;height:317px;"></div><span class="t vl" style="left:36px;top:66.4px">Top</span>
<div class="" style="left:399.7px;top:60.8px;width:478.7px;height:319.5px;background:#f4ec66;box-shadow:0 0 0 0.5px #b4ae3c;"></div><div class="vp" style="left:402.4px;top:63.7px;width:472.5px;height:313.9px;box-shadow:0 0 0.6px 0.5px #9a9640;"></div><span class="t vl" style="left:404.3px;top:66.2px">User</span>
<div class="" style="left:31.4px;top:383px;width:364.8px;height:336.6px;background:#38383e;"></div><div class="vp" style="left:32.7px;top:384.3px;width:362.2px;height:334px;"></div><span class="t vl" style="left:36px;top:388.8px">Left</span>
<div class="" style="left:400px;top:383px;width:477.2px;height:336.6px;background:#38383e;"></div><div class="vp" style="left:401.3px;top:384.3px;width:474.6px;height:334px;"></div><span class="t vl" style="left:404.6px;top:388.8px">Perspective</span>
<svg style="left:0px;top:0px;pointer-events:none;" width="1024" height="796" viewBox="0 0 1024 796"><path d="M54 336L54 357.6" stroke="#439a4c" stroke-width="1.4"/><path d="M54.6 357.4L72.4 357.4" stroke="#b4484c" stroke-width="1.4"/><path d="M422.2 338L422.2 357.6" stroke="#3a3690" stroke-width="1.4"/><path d="M422.6 357.6L440 357.6" stroke="#b4484c" stroke-width="1.4"/><path d="M53.6 678L53.6 697" stroke="#3a3690" stroke-width="1.4"/><path d="M35.4 697.2L54 697.2" stroke="#439a4c" stroke-width="1.4"/><path d="M422.2 679L422.2 698" stroke="#2c2a78" stroke-width="1.5"/><path d="M422.6 697.6L440 697.6" stroke="#b4484c" stroke-width="1.4"/><circle cx="423.2" cy="700.4" r="2.2" fill="#3aa04a"/></svg>
<span class="t" style="left:53.3px;top:329.2px;font-family:'Liberation Mono',monospace;font-weight:bold;font-size:6.5px;line-height:6.5px;color:#439a4c">y</span><span class="t" style="left:73.5px;top:351px;font-family:'Liberation Mono',monospace;font-weight:bold;font-size:6.5px;line-height:6.5px;color:#b4484c">x</span><span class="t" style="left:53.3px;top:351.2px;font-family:'Liberation Mono',monospace;font-weight:bold;font-size:6.5px;line-height:6.5px;color:#3a3690">z</span>
<span class="t" style="left:421.7px;top:330.8px;font-family:'Liberation Mono',monospace;font-weight:bold;font-size:6.5px;line-height:6.5px;color:#3a3690">z</span><span class="t" style="left:440.5px;top:351.6px;font-family:'Liberation Mono',monospace;font-weight:bold;font-size:6.5px;line-height:6.5px;color:#b4484c">x</span><span class="t" style="left:417.7px;top:352.4px;font-family:'Liberation Mono',monospace;font-weight:bold;font-size:6.5px;line-height:6.5px;color:#439a4c">y</span>
<span class="t" style="left:52.9px;top:670.6px;font-family:'Liberation Mono',monospace;font-weight:bold;font-size:6.5px;line-height:6.5px;color:#3a3690">z</span><span class="t" style="left:34.1px;top:689.8px;font-family:'Liberation Mono',monospace;font-weight:bold;font-size:6.5px;line-height:6.5px;color:#439a4c">y</span><span class="t" style="left:54.1px;top:690.8px;font-family:'Liberation Mono',monospace;font-weight:bold;font-size:6.5px;line-height:6.5px;color:#b4484c">x</span>
<span class="t" style="left:421.7px;top:671.4px;font-family:'Liberation Mono',monospace;font-weight:bold;font-size:6.5px;line-height:6.5px;color:#3a3690">z</span><span class="t" style="left:441.5px;top:691.4px;font-family:'Liberation Mono',monospace;font-weight:bold;font-size:6.5px;line-height:6.5px;color:#b4484c">x</span>
<svg style="left:0px;top:0px;pointer-events:none;" width="1024" height="796" viewBox="0 0 1024 796"><path d="M576.3 71.3C578.6 71.8 582.9 72.4 590.2 74.3C597.5 76.2 610.2 79.6 620.3 82.6C630.3 85.6 640.5 88.6 650.5 92.4C660.5 96.2 670.7 100.6 680.6 105.3C690.5 110.0 700.9 115.1 710.0 120.6C719.1 126.1 728.6 133.4 735.4 138.3C742.1 143.2 745.5 145.9 750.5 150.3C755.5 154.7 760.6 159.1 765.6 164.6C770.6 170.1 776.5 177.3 780.6 183.5C784.8 189.7 788.1 196.9 790.5 202.0C792.9 207.1 793.9 210.1 795.0 214.1C796.1 218.1 796.8 222.7 797.3 226.2C797.8 229.7 797.7 232.6 797.7 235.2C797.7 237.8 797.5 239.4 797.2 241.5C796.9 243.6 796.6 245.2 795.8 247.8C795.0 250.4 793.8 253.9 792.3 257.2C790.8 260.4 789.1 264.2 786.9 267.3C784.7 270.4 781.6 273.4 779.0 275.9C776.4 278.4 773.8 280.2 771.2 282.2C768.6 284.1 766.0 285.9 763.4 287.6C760.8 289.3 758.2 290.8 755.6 292.3C753.0 293.8 750.9 295.0 747.8 296.5C744.7 298.0 741.3 299.4 736.9 301.2C732.5 303.0 726.4 305.6 721.2 307.5C716.0 309.4 710.8 311.0 705.6 312.8C700.4 314.6 697.5 316.1 690.0 318.2C682.5 320.3 670.6 323.1 660.3 325.4C649.9 327.7 633.3 330.7 627.9 331.8L656.4 216.5L719.8 223.3L665.6 306.2C667.7 305.1 673.9 301.7 678.0 299.6C682.1 297.5 685.4 295.9 690.0 293.6C694.6 291.3 700.4 288.6 705.6 285.8C710.8 283.0 716.2 280.1 721.2 277.0C726.2 273.9 732.0 270.2 735.7 267.0C739.5 263.8 741.9 260.9 743.7 257.9C745.5 254.9 746.0 252.1 746.4 248.8C746.8 245.5 747.0 241.8 746.0 238.3C745.0 234.8 743.3 231.2 740.7 227.7C738.1 224.2 734.5 220.6 730.2 217.1C725.9 213.6 720.1 209.6 715.1 206.6C710.1 203.6 705.8 201.4 700.0 199.0C694.2 196.6 687.5 194.2 680.5 192.4C673.5 190.6 665.4 188.9 657.9 187.9C650.4 186.9 642.1 186.6 635.2 186.2C628.3 185.8 619.5 185.7 616.4 185.6Z" fill="#eeda62" stroke="#b8a646" stroke-width="0.7" stroke-linejoin="round"/><path d="M627.9 331.8L656.4 216.5M665.6 306.2C667.7 305.1 673.9 301.7 678.0 299.6C682.1 297.5 685.4 295.9 690.0 293.6C694.6 291.3 700.4 288.6 705.6 285.8C710.8 283.0 716.2 280.1 721.2 277.0C726.2 273.9 733.3 268.7 735.7 267.0M719.8 223.3L665.6 306.2" fill="none" stroke="#4a4210" stroke-width="0.7" stroke-dasharray="1.2 1.6" opacity="0.75"/></svg>
<svg style="left:0px;top:0px;pointer-events:none;" width="1024" height="796" viewBox="0 0 1024 796"><defs>
<linearGradient id="pg" gradientUnits="userSpaceOnUse" x1="556" y1="440" x2="706" y2="640">
<stop offset="0" stop-color="#fffff4"/><stop offset="0.2" stop-color="#fffef0"/><stop offset="0.33" stop-color="#fffbde"/><stop offset="0.41" stop-color="#f8f3c0"/><stop offset="0.51" stop-color="#ece294"/><stop offset="0.61" stop-color="#d8cc70"/><stop offset="0.66" stop-color="#cec062"/><stop offset="0.72" stop-color="#bcae4e"/><stop offset="0.8" stop-color="#a89c3e"/><stop offset="0.92" stop-color="#a89a38"/><stop offset="1" stop-color="#9e8e30"/></linearGradient>
<radialGradient id="ph" gradientUnits="userSpaceOnUse" cx="0" cy="0" r="1" gradientTransform="translate(594,462) rotate(14) scale(80,46)"><stop offset="0" stop-color="#fffff8" stop-opacity="0.9"/><stop offset="0.6" stop-color="#fffff2" stop-opacity="0.5"/><stop offset="1" stop-color="#fffce0" stop-opacity="0"/></radialGradient>
<linearGradient id="ptd" gradientUnits="userSpaceOnUse" x1="640" y1="500" x2="610" y2="670"><stop offset="0" stop-color="#9c8618" stop-opacity="0"/><stop offset="0.3" stop-color="#9c8618" stop-opacity="0.2"/><stop offset="0.6" stop-color="#94800e" stop-opacity="0.3"/><stop offset="1" stop-color="#94800e" stop-opacity="0.2"/></linearGradient>
<linearGradient id="pg2" gradientUnits="userSpaceOnUse" x1="690" y1="470" x2="760" y2="600"><stop offset="0" stop-color="#8a7a10" stop-opacity="0"/><stop offset="0.6" stop-color="#8a7a10" stop-opacity="0.06"/><stop offset="1" stop-color="#8a7a10" stop-opacity="0"/></linearGradient>
<pattern id="hat" patternUnits="userSpaceOnUse" width="4" height="8" patternTransform="rotate(-40)"><rect width="4" height="8" fill="#b8a838"/><rect width="1.7" height="8" fill="#7c6c18"/></pattern>
<linearGradient id="tsf" gradientUnits="userSpaceOnUse" x1="668" y1="548" x2="612" y2="636"><stop offset="0" stop-color="#a8982e"/><stop offset="1" stop-color="#8c7c1c"/></linearGradient>
<clipPath id="pcl"><path d="M553.2 443.7C558.3 443.8 574.5 443.4 584.0 444.0C593.5 444.6 601.5 445.8 610.3 447.2C619.1 448.6 629.2 450.9 636.7 452.6C644.2 454.3 649.4 455.9 655.0 457.6C660.6 459.3 665.2 460.8 670.2 463.0C675.2 465.2 680.0 467.7 685.0 470.6C690.0 473.5 695.3 476.9 700.3 480.6C705.3 484.3 710.0 488.2 715.0 492.6C720.0 497.0 725.6 501.6 730.5 507.0C735.4 512.4 741.0 519.0 744.6 524.8C748.2 530.6 750.9 536.8 752.4 542.0C753.9 547.2 754.1 550.7 753.8 556.0C753.5 561.3 752.0 568.1 750.4 573.6C748.8 579.1 747.6 583.5 744.0 588.8C740.4 594.1 734.0 600.9 729.0 605.4C724.0 609.9 719.4 612.7 714.0 616.0C708.6 619.3 702.4 622.5 696.9 625.4C691.4 628.3 686.5 630.9 681.3 633.2C676.1 635.5 670.9 637.5 665.7 639.4C660.5 641.3 655.2 643.2 650.0 644.9C644.8 646.6 639.6 648.0 634.4 649.6C629.2 651.2 624.9 652.7 618.8 654.3C612.7 655.9 605.2 657.8 597.7 659.4C590.2 661.0 577.6 663.4 573.6 664.2L606.2 545.4L664.7 546.4L608.6 638.4C613.1 636.2 627.8 629.1 635.4 625.2C643.0 621.3 648.0 618.7 654.3 614.8C660.6 610.9 667.5 606.3 673.1 601.6C678.8 596.9 684.5 591.4 688.2 586.5C691.9 581.6 694.3 576.2 695.4 572.0C696.5 567.8 695.6 564.5 694.6 561.0C693.6 557.5 692.3 554.7 689.4 551.3C686.5 547.9 681.4 544.0 677.0 540.8C672.6 537.6 668.2 534.6 663.0 532.0C657.8 529.4 651.4 526.9 645.5 525.0C639.6 523.1 633.8 521.5 627.9 520.5C622.0 519.5 616.2 519.0 610.3 518.8C604.4 518.6 598.7 519.0 592.7 519.3C586.7 519.6 577.4 520.3 574.3 520.5Z"/></clipPath>
</defs><path d="M553.2 443.7C558.3 443.8 574.5 443.4 584.0 444.0C593.5 444.6 601.5 445.8 610.3 447.2C619.1 448.6 629.2 450.9 636.7 452.6C644.2 454.3 649.4 455.9 655.0 457.6C660.6 459.3 665.2 460.8 670.2 463.0C675.2 465.2 680.0 467.7 685.0 470.6C690.0 473.5 695.3 476.9 700.3 480.6C705.3 484.3 710.0 488.2 715.0 492.6C720.0 497.0 725.6 501.6 730.5 507.0C735.4 512.4 741.0 519.0 744.6 524.8C748.2 530.6 750.9 536.8 752.4 542.0C753.9 547.2 754.1 550.7 753.8 556.0C753.5 561.3 752.0 568.1 750.4 573.6C748.8 579.1 747.6 583.5 744.0 588.8C740.4 594.1 734.0 600.9 729.0 605.4C724.0 609.9 719.4 612.7 714.0 616.0C708.6 619.3 702.4 622.5 696.9 625.4C691.4 628.3 686.5 630.9 681.3 633.2C676.1 635.5 670.9 637.5 665.7 639.4C660.5 641.3 655.2 643.2 650.0 644.9C644.8 646.6 639.6 648.0 634.4 649.6C629.2 651.2 624.9 652.7 618.8 654.3C612.7 655.9 605.2 657.8 597.7 659.4C590.2 661.0 577.6 663.4 573.6 664.2L606.2 545.4L664.7 546.4L608.6 638.4C613.1 636.2 627.8 629.1 635.4 625.2C643.0 621.3 648.0 618.7 654.3 614.8C660.6 610.9 667.5 606.3 673.1 601.6C678.8 596.9 684.5 591.4 688.2 586.5C691.9 581.6 694.3 576.2 695.4 572.0C696.5 567.8 695.6 564.5 694.6 561.0C693.6 557.5 692.3 554.7 689.4 551.3C686.5 547.9 681.4 544.0 677.0 540.8C672.6 537.6 668.2 534.6 663.0 532.0C657.8 529.4 651.4 526.9 645.5 525.0C639.6 523.1 633.8 521.5 627.9 520.5C622.0 519.5 616.2 519.0 610.3 518.8C604.4 518.6 598.7 519.0 592.7 519.3C586.7 519.6 577.4 520.3 574.3 520.5Z" transform="translate(1.6,1.7)" fill="#e4d254" stroke="#8e7e22" stroke-width="0.6"/><path d="M574.3 520.5C577.4 520.3 586.7 519.6 592.7 519.3C598.7 519.0 604.4 518.6 610.3 518.8C616.2 519.0 622.0 519.5 627.9 520.5C633.8 521.5 639.6 523.1 645.5 525.0C651.4 526.9 657.8 529.4 663.0 532.0C668.2 534.6 672.6 537.6 677.0 540.8C681.4 544.0 686.5 547.9 689.4 551.3C692.3 554.7 693.6 557.5 694.6 561.0C695.6 564.5 695.3 570.2 695.4 572.0L694.4 569C693.3 567.6 690.6 563.6 687.7 560.6C684.8 557.6 681.1 554.3 677.0 551.3C672.9 548.3 668.2 545.2 663.0 542.8C657.8 540.3 651.4 538.1 645.5 536.6C639.6 535.1 633.8 534.3 627.9 533.7C622.0 533.1 616.9 533.1 610.3 533.2C603.7 533.4 592.0 534.4 588.3 534.6Z" fill="#c2b044" stroke="#6e6014" stroke-width="0.5"/><clipPath id="scl"><path d="M574.3 520.5C577.4 520.3 586.7 519.6 592.7 519.3C598.7 519.0 604.4 518.6 610.3 518.8C616.2 519.0 622.0 519.5 627.9 520.5C633.8 521.5 639.6 523.1 645.5 525.0C651.4 526.9 657.8 529.4 663.0 532.0C668.2 534.6 672.6 537.6 677.0 540.8C681.4 544.0 686.5 547.9 689.4 551.3C692.3 554.7 693.6 557.5 694.6 561.0C695.6 564.5 695.3 570.2 695.4 572.0L694.4 569C693.3 567.6 690.6 563.6 687.7 560.6C684.8 557.6 681.1 554.3 677.0 551.3C672.9 548.3 668.2 545.2 663.0 542.8C657.8 540.3 651.4 538.1 645.5 536.6C639.6 535.1 633.8 534.3 627.9 533.7C622.0 533.1 616.9 533.1 610.3 533.2C603.7 533.4 592.0 534.4 588.3 534.6Z"/></clipPath><path d="M572.8 518.5l16.5 22.0M588.2 517.5l15.8 22.0M597.5 517.1l15.3 22.0M605.3 516.9l15.0 22.0M612.4 517.1l14.6 22.0M619.0 517.8l14.3 22.0M625.2 518.4l14.0 22.0M631.0 519.6l13.7 22.0M636.7 521.1l13.4 22.0M642.1 522.4l13.2 22.0M647.3 524.2l12.9 22.0M652.4 526.2l12.7 22.0M657.3 528.2l12.4 22.0M662.1 530.1l12.2 22.0M665.8 532.5l12.0 22.0M669.5 534.8l11.8 22.0M673.1 537.0l11.5 22.0M676.6 539.3l11.3 22.0M679.6 541.9l11.1 22.0M682.7 544.4l10.9 22.0M685.7 546.9l10.7 22.0M688.5 549.4l10.5 22.0M689.7 551.7l10.3 22.0M690.9 553.9l10.1 22.0M692.1 556.1l9.9 22.0M693.3 558.2l9.7 22.0M693.8 560.6l9.5 22.0M694.0 563.0l9.3 22.0M694.2 565.3l9.2 22.0M694.4 567.7l9.0 22.0" stroke="#6e5e14" stroke-width="1.15" fill="none" opacity="0.9" clip-path="url(#scl)"/><path d="M574.3 520.5C577.4 520.3 586.7 519.6 592.7 519.3C598.7 519.0 604.4 518.6 610.3 518.8C616.2 519.0 622.0 519.5 627.9 520.5C633.8 521.5 639.6 523.1 645.5 525.0C651.4 526.9 657.8 529.4 663.0 532.0C668.2 534.6 672.6 537.6 677.0 540.8C681.4 544.0 686.5 547.9 689.4 551.3C692.3 554.7 693.6 557.5 694.6 561.0C695.6 564.5 695.3 570.2 695.4 572.0" fill="none" stroke="#5e5010" stroke-width="0.8"/><path d="M664.7 546.4L672.3 556.2L630.7 626.1L608.6 638.4Z" fill="url(#tsf)" stroke="#d0c060" stroke-width="0.6"/><path d="M553.2 443.7C558.3 443.8 574.5 443.4 584.0 444.0C593.5 444.6 601.5 445.8 610.3 447.2C619.1 448.6 629.2 450.9 636.7 452.6C644.2 454.3 649.4 455.9 655.0 457.6C660.6 459.3 665.2 460.8 670.2 463.0C675.2 465.2 680.0 467.7 685.0 470.6C690.0 473.5 695.3 476.9 700.3 480.6C705.3 484.3 710.0 488.2 715.0 492.6C720.0 497.0 725.6 501.6 730.5 507.0C735.4 512.4 741.0 519.0 744.6 524.8C748.2 530.6 750.9 536.8 752.4 542.0C753.9 547.2 754.1 550.7 753.8 556.0C753.5 561.3 752.0 568.1 750.4 573.6C748.8 579.1 747.6 583.5 744.0 588.8C740.4 594.1 734.0 600.9 729.0 605.4C724.0 609.9 719.4 612.7 714.0 616.0C708.6 619.3 702.4 622.5 696.9 625.4C691.4 628.3 686.5 630.9 681.3 633.2C676.1 635.5 670.9 637.5 665.7 639.4C660.5 641.3 655.2 643.2 650.0 644.9C644.8 646.6 639.6 648.0 634.4 649.6C629.2 651.2 624.9 652.7 618.8 654.3C612.7 655.9 605.2 657.8 597.7 659.4C590.2 661.0 577.6 663.4 573.6 664.2L606.2 545.4L664.7 546.4L608.6 638.4C613.1 636.2 627.8 629.1 635.4 625.2C643.0 621.3 648.0 618.7 654.3 614.8C660.6 610.9 667.5 606.3 673.1 601.6C678.8 596.9 684.5 591.4 688.2 586.5C691.9 581.6 694.3 576.2 695.4 572.0C696.5 567.8 695.6 564.5 694.6 561.0C693.6 557.5 692.3 554.7 689.4 551.3C686.5 547.9 681.4 544.0 677.0 540.8C672.6 537.6 668.2 534.6 663.0 532.0C657.8 529.4 651.4 526.9 645.5 525.0C639.6 523.1 633.8 521.5 627.9 520.5C622.0 519.5 616.2 519.0 610.3 518.8C604.4 518.6 598.7 519.0 592.7 519.3C586.7 519.6 577.4 520.3 574.3 520.5Z" fill="url(#pg)"/><path d="M553.2 443.7C558.3 443.8 574.5 443.4 584.0 444.0C593.5 444.6 601.5 445.8 610.3 447.2C619.1 448.6 629.2 450.9 636.7 452.6C644.2 454.3 649.4 455.9 655.0 457.6C660.6 459.3 665.2 460.8 670.2 463.0C675.2 465.2 680.0 467.7 685.0 470.6C690.0 473.5 695.3 476.9 700.3 480.6C705.3 484.3 710.0 488.2 715.0 492.6C720.0 497.0 725.6 501.6 730.5 507.0C735.4 512.4 741.0 519.0 744.6 524.8C748.2 530.6 750.9 536.8 752.4 542.0C753.9 547.2 754.1 550.7 753.8 556.0C753.5 561.3 752.0 568.1 750.4 573.6C748.8 579.1 747.6 583.5 744.0 588.8C740.4 594.1 734.0 600.9 729.0 605.4C724.0 609.9 719.4 612.7 714.0 616.0C708.6 619.3 702.4 622.5 696.9 625.4C691.4 628.3 686.5 630.9 681.3 633.2C676.1 635.5 670.9 637.5 665.7 639.4C660.5 641.3 655.2 643.2 650.0 644.9C644.8 646.6 639.6 648.0 634.4 649.6C629.2 651.2 624.9 652.7 618.8 654.3C612.7 655.9 605.2 657.8 597.7 659.4C590.2 661.0 577.6 663.4 573.6 664.2L606.2 545.4L664.7 546.4L608.6 638.4C613.1 636.2 627.8 629.1 635.4 625.2C643.0 621.3 648.0 618.7 654.3 614.8C660.6 610.9 667.5 606.3 673.1 601.6C678.8 596.9 684.5 591.4 688.2 586.5C691.9 581.6 694.3 576.2 695.4 572.0C696.5 567.8 695.6 564.5 694.6 561.0C693.6 557.5 692.3 554.7 689.4 551.3C686.5 547.9 681.4 544.0 677.0 540.8C672.6 537.6 668.2 534.6 663.0 532.0C657.8 529.4 651.4 526.9 645.5 525.0C639.6 523.1 633.8 521.5 627.9 520.5C622.0 519.5 616.2 519.0 610.3 518.8C604.4 518.6 598.7 519.0 592.7 519.3C586.7 519.6 577.4 520.3 574.3 520.5Z" fill="url(#ph)"/><path d="M553.2 443.7C558.3 443.8 574.5 443.4 584.0 444.0C593.5 444.6 601.5 445.8 610.3 447.2C619.1 448.6 629.2 450.9 636.7 452.6C644.2 454.3 649.4 455.9 655.0 457.6C660.6 459.3 665.2 460.8 670.2 463.0C675.2 465.2 680.0 467.7 685.0 470.6C690.0 473.5 695.3 476.9 700.3 480.6C705.3 484.3 710.0 488.2 715.0 492.6C720.0 497.0 725.6 501.6 730.5 507.0C735.4 512.4 741.0 519.0 744.6 524.8C748.2 530.6 750.9 536.8 752.4 542.0C753.9 547.2 754.1 550.7 753.8 556.0C753.5 561.3 752.0 568.1 750.4 573.6C748.8 579.1 747.6 583.5 744.0 588.8C740.4 594.1 734.0 600.9 729.0 605.4C724.0 609.9 719.4 612.7 714.0 616.0C708.6 619.3 702.4 622.5 696.9 625.4C691.4 628.3 686.5 630.9 681.3 633.2C676.1 635.5 670.9 637.5 665.7 639.4C660.5 641.3 655.2 643.2 650.0 644.9C644.8 646.6 639.6 648.0 634.4 649.6C629.2 651.2 624.9 652.7 618.8 654.3C612.7 655.9 605.2 657.8 597.7 659.4C590.2 661.0 577.6 663.4 573.6 664.2L606.2 545.4L664.7 546.4L608.6 638.4C613.1 636.2 627.8 629.1 635.4 625.2C643.0 621.3 648.0 618.7 654.3 614.8C660.6 610.9 667.5 606.3 673.1 601.6C678.8 596.9 684.5 591.4 688.2 586.5C691.9 581.6 694.3 576.2 695.4 572.0C696.5 567.8 695.6 564.5 694.6 561.0C693.6 557.5 692.3 554.7 689.4 551.3C686.5 547.9 681.4 544.0 677.0 540.8C672.6 537.6 668.2 534.6 663.0 532.0C657.8 529.4 651.4 526.9 645.5 525.0C639.6 523.1 633.8 521.5 627.9 520.5C622.0 519.5 616.2 519.0 610.3 518.8C604.4 518.6 598.7 519.0 592.7 519.3C586.7 519.6 577.4 520.3 574.3 520.5Z" fill="url(#pg2)"/><path d="M553.2 443.7C558.3 443.8 574.5 443.4 584.0 444.0C593.5 444.6 601.5 445.8 610.3 447.2C619.1 448.6 629.2 450.9 636.7 452.6C644.2 454.3 649.4 455.9 655.0 457.6C660.6 459.3 665.2 460.8 670.2 463.0C675.2 465.2 680.0 467.7 685.0 470.6C690.0 473.5 695.3 476.9 700.3 480.6C705.3 484.3 710.0 488.2 715.0 492.6C720.0 497.0 725.6 501.6 730.5 507.0C735.4 512.4 741.0 519.0 744.6 524.8C748.2 530.6 750.9 536.8 752.4 542.0C753.9 547.2 754.1 550.7 753.8 556.0C753.5 561.3 752.0 568.1 750.4 573.6C748.8 579.1 747.6 583.5 744.0 588.8C740.4 594.1 734.0 600.9 729.0 605.4C724.0 609.9 719.4 612.7 714.0 616.0C708.6 619.3 702.4 622.5 696.9 625.4C691.4 628.3 686.5 630.9 681.3 633.2C676.1 635.5 670.9 637.5 665.7 639.4C660.5 641.3 655.2 643.2 650.0 644.9C644.8 646.6 639.6 648.0 634.4 649.6C629.2 651.2 624.9 652.7 618.8 654.3C612.7 655.9 605.2 657.8 597.7 659.4C590.2 661.0 577.6 663.4 573.6 664.2L606.2 545.4L664.7 546.4L608.6 638.4C613.1 636.2 627.8 629.1 635.4 625.2C643.0 621.3 648.0 618.7 654.3 614.8C660.6 610.9 667.5 606.3 673.1 601.6C678.8 596.9 684.5 591.4 688.2 586.5C691.9 581.6 694.3 576.2 695.4 572.0C696.5 567.8 695.6 564.5 694.6 561.0C693.6 557.5 692.3 554.7 689.4 551.3C686.5 547.9 681.4 544.0 677.0 540.8C672.6 537.6 668.2 534.6 663.0 532.0C657.8 529.4 651.4 526.9 645.5 525.0C639.6 523.1 633.8 521.5 627.9 520.5C622.0 519.5 616.2 519.0 610.3 518.8C604.4 518.6 598.7 519.0 592.7 519.3C586.7 519.6 577.4 520.3 574.3 520.5Z" fill="url(#ptd)"/><path d="M608.6 638.4C613.1 636.2 627.8 629.1 635.4 625.2C643.0 621.3 648.0 618.7 654.3 614.8C660.6 610.9 667.5 606.3 673.1 601.6C678.8 596.9 684.5 591.4 688.2 586.5C691.9 581.6 694.3 576.2 695.4 572.0C696.5 567.8 695.6 564.5 694.6 561.0C693.6 557.5 690.3 552.9 689.4 551.3M664.7 546.4L608.6 638.4" fill="none" stroke="#e8dc88" stroke-width="0.7" opacity="0.8"/></svg>
<svg style="left:0px;top:0px;pointer-events:none;" width="1024" height="796" viewBox="0 0 1024 796"><path d="M117.0 189.6L314.0 242.8M314.0 242.8L305.6 280.4M305.6 280.4L107.8 227.2M107.8 227.2L117.0 189.6M116.4 192.2L313.4 245.4M108.4 224.6L306.2 277.8M127.2 192.4L118.0 230.0M137.3 195.1L128.2 232.7M147.3 197.8L138.3 235.4M157.3 200.5L148.3 238.1M167.2 203.1L158.2 240.7M177.0 205.8L168.0 243.4M186.7 208.4L177.7 246.0M196.3 211.0L187.4 248.6M205.8 213.6L197.0 251.2M215.3 216.1L206.5 253.7M224.7 218.7L215.9 256.3M234.0 221.2L225.3 258.8M243.2 223.7L234.5 261.3M252.3 226.1L243.7 263.7M261.4 228.6L252.8 266.2M270.4 231.0L261.8 268.6M279.2 233.4L270.7 271.0M288.1 235.8L279.6 273.4M296.8 238.2L288.3 275.8M305.4 240.5L297.0 278.1M160.6 208.6L275.4 235.4M275.4 235.4L267.0 273.0M267.0 273.0L152.2 245.2M152.2 245.2L160.6 208.6M160.1 210.7L274.9 237.6M152.7 243.1L267.5 270.8M169.5 210.7L161.1 247.4M178.3 212.7L169.9 249.5M187.0 214.8L178.6 251.6M195.6 216.8L187.2 253.7M204.1 218.7L195.7 255.7M212.4 220.7L204.0 257.8M220.7 222.6L212.3 259.8M228.8 224.5L220.4 261.7M236.9 226.4L228.5 263.7M244.8 228.3L236.4 265.6M252.6 230.1L244.2 267.5M260.3 231.9L251.9 269.3M267.9 233.7L259.5 271.2M268.5 233.8L260.1 271.3M270.2 234.2L261.8 271.7M272.0 234.6L263.6 272.2M273.7 235.0L265.3 272.6M163.0 211.6L222.0 225.6" fill="none" stroke="#e0c64e" stroke-width="1.05" stroke-linecap="round"/><path d="M195.2 471.4L217.8 470.2M217.8 470.2L224.1 530.5M195.2 471.4L201.5 530.5M201.5 530.5L207.7 533.5M196.7 472.9L217.3 471.9M196.7 472.9L202.7 529.5M219.3 472.2L225.1 528.5M217.8 470.2C219.1 471.4 222.9 473.5 225.8 477.7C228.8 481.9 232.5 489.0 235.4 495.3C238.2 501.6 241.0 509.9 242.9 515.4C244.8 520.8 245.7 521.7 246.7 528.0C247.7 534.2 249.1 545.1 249.2 553.1C249.3 561.0 248.5 569.4 247.5 575.7C246.4 582.0 244.5 586.6 242.9 590.8C241.3 595.0 240.4 597.3 237.9 600.8C235.4 604.4 229.5 610.3 227.9 612.1M206.5 612.1L227.9 612.1M206.5 612.1L206.5 550.6M206.5 550.6L218.3 550.6M227.9 612.1L227.3 600.8M207.7 610.9L207.7 552.1M207.7 533.5C208.8 535.1 212.3 539.3 214.0 543.0C215.8 546.7 217.3 551.0 218.3 555.6C219.3 560.2 220.0 565.7 219.8 570.7C219.6 575.7 218.7 580.9 217.3 585.8C215.9 590.6 212.5 597.3 211.5 599.6M232.9 534.2C233.8 536.1 236.8 541.1 238.4 545.5C240.0 549.9 241.7 555.6 242.4 560.6C243.2 565.6 243.3 571.1 242.9 575.7C242.5 580.3 241.3 584.7 239.9 588.3C238.6 591.8 235.7 595.6 234.9 597.1M207.7 533.5L224.1 531.0M224.1 531.0L232.9 534.2M211.5 599.6L234.9 597.1M209.2 535.7L234.1 536.8M210.6 537.8L235.4 539.4M212.0 540.0L236.6 541.9M213.5 542.2L237.9 544.5M214.6 544.7L239.0 547.6M215.6 547.6L239.9 551.0M216.6 550.5L240.8 554.5M217.5 553.3L241.7 557.9M218.4 556.3L242.4 561.3M218.7 559.7L242.6 564.7M219.1 563.1L242.7 568.2M219.4 566.6L242.8 571.6M219.7 570.0L242.9 575.0M219.4 573.4L242.4 578.0M218.8 576.8L241.7 580.8M218.2 580.3L241.0 583.7M217.6 583.7L240.3 586.6M216.8 587.0L239.5 589.1M215.5 590.2L238.3 591.1M214.1 593.3L237.2 593.1M212.8 596.4L236.0 595.1M225.8 548.1L224.8 597.8M231.1 548.1L230.1 597.8M236.6 548.1L235.6 597.8" fill="none" stroke="#e2c84e" stroke-width="0.9" stroke-linecap="round"/></svg>
<div class="" style="left:31px;top:720.2px;width:850px;height:13.4px;background:#c5c5c5;"></div>
<div class="btn" style="left:31.6px;top:720.6px;width:12px;height:12.2px;border-bottom:1px solid #999;border-right:1px solid #999;"></div>
<div class="btn" style="left:144.6px;top:720.6px;width:12px;height:12.2px;border-bottom:1px solid #999;border-right:1px solid #999;"></div>
<div class="btn" style="left:44px;top:720.2px;width:100.4px;height:13.2px;border-bottom:2px solid #4a4a4a;border-right:1.6px solid #4a4a4a;background:#c9c9c9;"></div>
<span class="t" style="left:80.90px;top:720.60px;font-size:10.4px;line-height:10.4px;height:10.4px;color:#1a1a1a;transform:scaleX(0.8615);">0 / 100</span>
<svg style="left:34.6px;top:723.6px;" width="5" height="6.6" viewBox="0 0 5 6.6"><path d="M4 0.6L1 3.300L4 6" fill="none" stroke="#333" stroke-width="1.1"/></svg>
<svg style="left:148.4px;top:723.6px;" width="5" height="6.6" viewBox="0 0 5 6.6"><path d="M1 0.6L4 3.300L1 6" fill="none" stroke="#333" stroke-width="1.1"/></svg>
<div class="" style="left:31px;top:734.2px;width:850px;height:22.6px;background:#c5c5c5;border-top:1px solid #d8d8d8;"></div>
<svg style="left:41.4px;top:738.6px;" width="15" height="13.6" viewBox="0 0 15 13.6"><rect x="0.4" y="0.4" width="13.800" height="4.200" fill="#1c1c1c"/><path d="M2.600 2.500h9" stroke="#e8e8e8" stroke-width="1.100"/><path d="M0 12.200H14.600" stroke="#1c1c1c" stroke-width="2.200"/><path d="M3.600 6V11M10.600 6V11" stroke="#222" stroke-width="1.1"/><path d="M1.800 8.400L3.600 6L5.400 8.400ZM8.800 8.600L10.600 11L12.400 8.600Z" fill="#222"/></svg>
<div class="" style="left:72px;top:735.6px;width:6.8px;height:19.4px;background:#9ab4cc;border:1px solid #6a88a6;"></div>
<svg style="left:0px;top:0px;pointer-events:none;" width="1024" height="796" viewBox="0 0 1024 796"><path d="M74.9 736.4V744.2M82.5 736.4V744.2M90.1 736.4V744.2M97.7 736.4V744.2M105.3 736.4V744.2M112.9 736.4V744.2M120.5 736.4V744.2M128.1 736.4V744.2M135.7 736.4V744.2M143.3 736.4V744.2M150.9 736.4V744.2M158.5 736.4V744.2M166.1 736.4V744.2M173.7 736.4V744.2M181.3 736.4V744.2M188.9 736.4V744.2M196.5 736.4V744.2M204.1 736.4V744.2M211.7 736.4V744.2M219.3 736.4V744.2M226.9 736.4V744.2M234.5 736.4V744.2M242.1 736.4V744.2M249.7 736.4V744.2M257.3 736.4V744.2M264.9 736.4V744.2M272.5 736.4V744.2M280.1 736.4V744.2M287.7 736.4V744.2M295.3 736.4V744.2M302.9 736.4V744.2M310.5 736.4V744.2M318.1 736.4V744.2M325.7 736.4V744.2M333.3 736.4V744.2M340.9 736.4V744.2M348.5 736.4V744.2M356.1 736.4V744.2M363.7 736.4V744.2M371.3 736.4V744.2M378.9 736.4V744.2M386.5 736.4V744.2M394.1 736.4V744.2M401.7 736.4V744.2M409.3 736.4V744.2M416.9 736.4V744.2M424.5 736.4V744.2M432.1 736.4V744.2M439.7 736.4V744.2M447.3 736.4V744.2M454.9 736.4V744.2M462.5 736.4V744.2M470.1 736.4V744.2M477.7 736.4V744.2M485.3 736.4V744.2M492.9 736.4V744.2M500.5 736.4V744.2M508.1 736.4V744.2M515.7 736.4V744.2M523.3 736.4V744.2M530.9 736.4V744.2M538.5 736.4V744.2M546.1 736.4V744.2M553.7 736.4V744.2M561.3 736.4V744.2M568.9 736.4V744.2M576.5 736.4V744.2M584.1 736.4V744.2M591.7 736.4V744.2M599.3 736.4V744.2M606.9 736.4V744.2M614.5 736.4V744.2M622.1 736.4V744.2M629.7 736.4V744.2M637.3 736.4V744.2M644.9 736.4V744.2M652.5 736.4V744.2M660.1 736.4V744.2M667.7 736.4V744.2M675.3 736.4V744.2M682.9 736.4V744.2M690.5 736.4V744.2M698.1 736.4V744.2M705.7 736.4V744.2M713.3 736.4V744.2M720.9 736.4V744.2M728.5 736.4V744.2M736.1 736.4V744.2M743.7 736.4V744.2M751.3 736.4V744.2M758.9 736.4V744.2M766.5 736.4V744.2M774.1 736.4V744.2M781.7 736.4V744.2M789.3 736.4V744.2M796.9 736.4V744.2M804.5 736.4V744.2M812.1 736.4V744.2M819.7 736.4V744.2M827.3 736.4V744.2M834.9 736.4V744.2" stroke="#6e6e6e" stroke-width="0.9"/><path d="M74.9 736.4V744.2M82.5 736.4V744.2M90.1 736.4V744.2M97.7 736.4V744.2M105.3 736.4V744.2M112.9 736.4V744.2M120.5 736.4V744.2M128.1 736.4V744.2M135.7 736.4V744.2M143.3 736.4V744.2M150.9 736.4V744.2M158.5 736.4V744.2M166.1 736.4V744.2M173.7 736.4V744.2M181.3 736.4V744.2M188.9 736.4V744.2M196.5 736.4V744.2M204.1 736.4V744.2M211.7 736.4V744.2M219.3 736.4V744.2M226.9 736.4V744.2M234.5 736.4V744.2M242.1 736.4V744.2M249.7 736.4V744.2M257.3 736.4V744.2M264.9 736.4V744.2M272.5 736.4V744.2M280.1 736.4V744.2M287.7 736.4V744.2M295.3 736.4V744.2M302.9 736.4V744.2M310.5 736.4V744.2M318.1 736.4V744.2M325.7 736.4V744.2M333.3 736.4V744.2M340.9 736.4V744.2M348.5 736.4V744.2M356.1 736.4V744.2M363.7 736.4V744.2M371.3 736.4V744.2M378.9 736.4V744.2M386.5 736.4V744.2M394.1 736.4V744.2M401.7 736.4V744.2M409.3 736.4V744.2M416.9 736.4V744.2M424.5 736.4V744.2M432.1 736.4V744.2M439.7 736.4V744.2M447.3 736.4V744.2M454.9 736.4V744.2M462.5 736.4V744.2M470.1 736.4V744.2M477.7 736.4V744.2M485.3 736.4V744.2M492.9 736.4V744.2M500.5 736.4V744.2M508.1 736.4V744.2M515.7 736.4V744.2M523.3 736.4V744.2M530.9 736.4V744.2M538.5 736.4V744.2M546.1 736.4V744.2M553.7 736.4V744.2M561.3 736.4V744.2M568.9 736.4V744.2M576.5 736.4V744.2M584.1 736.4V744.2M591.7 736.4V744.2M599.3 736.4V744.2M606.9 736.4V744.2M614.5 736.4V744.2M622.1 736.4V744.2M629.7 736.4V744.2M637.3 736.4V744.2M644.9 736.4V744.2M652.5 736.4V744.2M660.1 736.4V744.2M667.7 736.4V744.2M675.3 736.4V744.2M682.9 736.4V744.2M690.5 736.4V744.2M698.1 736.4V744.2M705.7 736.4V744.2M713.3 736.4V744.2M720.9 736.4V744.2M728.5 736.4V744.2M736.1 736.4V744.2M743.7 736.4V744.2M751.3 736.4V744.2M758.9 736.4V744.2M766.5 736.4V744.2M774.1 736.4V744.2M781.7 736.4V744.2M789.3 736.4V744.2M796.9 736.4V744.2M804.5 736.4V744.2M812.1 736.4V744.2M819.7 736.4V744.2M827.3 736.4V744.2M834.9 736.4V744.2" stroke="#ececec" stroke-width="0.8" transform="translate(1,0)"/></svg>
<span class="t" style="left:73.02px;top:744.80px;font-size:10.8px;line-height:10.8px;height:10.8px;color:#2a4a6a;transform:scaleX(0.7600);">0</span>
<span class="t" style="left:111.02px;top:744.80px;font-size:10.8px;line-height:10.8px;height:10.8px;color:#1a1a1a;transform:scaleX(0.7600);">5</span>
<span class="t" style="left:146.73px;top:744.80px;font-size:10.8px;line-height:10.8px;height:10.8px;color:#1a1a1a;transform:scaleX(0.7600);">10</span>
<span class="t" style="left:184.73px;top:744.80px;font-size:10.8px;line-height:10.8px;height:10.8px;color:#1a1a1a;transform:scaleX(0.7600);">15</span>
<span class="t" style="left:222.73px;top:744.80px;font-size:10.8px;line-height:10.8px;height:10.8px;color:#1a1a1a;transform:scaleX(0.7600);">20</span>
<span class="t" style="left:260.73px;top:744.80px;font-size:10.8px;line-height:10.8px;height:10.8px;color:#1a1a1a;transform:scaleX(0.7600);">25</span>
<span class="t" style="left:298.73px;top:744.80px;font-size:10.8px;line-height:10.8px;height:10.8px;color:#1a1a1a;transform:scaleX(0.7600);">30</span>
<span class="t" style="left:336.73px;top:744.80px;font-size:10.8px;line-height:10.8px;height:10.8px;color:#1a1a1a;transform:scaleX(0.7600);">35</span>
<span class="t" style="left:374.73px;top:744.80px;font-size:10.8px;line-height:10.8px;height:10.8px;color:#1a1a1a;transform:scaleX(0.7600);">40</span>
<span class="t" style="left:412.73px;top:744.80px;font-size:10.8px;line-height:10.8px;height:10.8px;color:#1a1a1a;transform:scaleX(0.7600);">45</span>
<span class="t" style="left:450.73px;top:744.80px;font-size:10.8px;line-height:10.8px;height:10.8px;color:#1a1a1a;transform:scaleX(0.7600);">50</span>
<span class="t" style="left:488.73px;top:744.80px;font-size:10.8px;line-height:10.8px;height:10.8px;color:#1a1a1a;transform:scaleX(0.7600);">55</span>
<span class="t" style="left:526.73px;top:744.80px;font-size:10.8px;line-height:10.8px;height:10.8px;color:#1a1a1a;transform:scaleX(0.7600);">60</span>
<span class="t" style="left:564.73px;top:744.80px;font-size:10.8px;line-height:10.8px;height:10.8px;color:#1a1a1a;transform:scaleX(0.7600);">65</span>
<span class="t" style="left:602.73px;top:744.80px;font-size:10.8px;line-height:10.8px;height:10.8px;color:#1a1a1a;transform:scaleX(0.7600);">70</span>
<span class="t" style="left:640.73px;top:744.80px;font-size:10.8px;line-height:10.8px;height:10.8px;color:#1a1a1a;transform:scaleX(0.7600);">75</span>
<span class="t" style="left:678.73px;top:744.80px;font-size:10.8px;line-height:10.8px;height:10.8px;color:#1a1a1a;transform:scaleX(0.7600);">80</span>
<span class="t" style="left:716.73px;top:744.80px;font-size:10.8px;line-height:10.8px;height:10.8px;color:#1a1a1a;transform:scaleX(0.7600);">85</span>
<span class="t" style="left:754.73px;top:744.80px;font-size:10.8px;line-height:10.8px;height:10.8px;color:#1a1a1a;transform:scaleX(0.7600);">90</span>
<span class="t" style="left:792.73px;top:744.80px;font-size:10.8px;line-height:10.8px;height:10.8px;color:#1a1a1a;transform:scaleX(0.7600);">95</span>
<span class="t" style="left:828.45px;top:744.80px;font-size:10.8px;line-height:10.8px;height:10.8px;color:#1a1a1a;transform:scaleX(0.7600);">100</span>
<div class="" style="left:0px;top:756.8px;width:1024px;height:39.2px;background:#c5c5c5;"></div>
<div class="" style="left:0px;top:756.4px;width:84px;height:1px;background:#8a8a8a;"></div>
<div class="" style="left:1px;top:758.2px;width:76.6px;height:17.2px;background:#e6c3c3;border-top:1.5px solid #6a6a6a;border-left:1.5px solid #6a6a6a;"></div>
<div class="" style="left:1px;top:776.6px;width:76.6px;height:16.6px;background:#ffffff;border-top:1.5px solid #6a6a6a;border-left:1.5px solid #6a6a6a;"></div>
<div class="" style="left:78.4px;top:758px;width:1.2px;height:38px;background:#e8e8e8;"></div>
<div class="" style="left:82.6px;top:758px;width:1px;height:38px;background:#9a9a9a;box-shadow:1px 0 0 #e8e8e8;"></div>
<div class="fld" style="left:86px;top:759.2px;width:262px;height:16.6px;"></div>
<span class="t" style="left:90.00px;top:763.10px;font-size:9.4px;line-height:9.4px;height:9.4px;color:#1a1a1a;transform:scaleX(0.9405);">None Selected</span>
<div class="fld" style="left:86px;top:778.6px;width:500px;height:17.4px;"></div>
<span class="t" style="left:90.00px;top:783.10px;font-size:9.4px;line-height:9.4px;height:9.4px;color:#1a1a1a;transform:scaleX(0.9140);">Click and drag to select and rotate objects</span>
<svg style="left:354.4px;top:761.6px;" width="8" height="10.6" viewBox="0 0 8 10.6"><path d="M2 5V3.200C2 0.400 6 0.400 6 3.200V5" fill="none" stroke="#222" stroke-width="1.2"/><rect x="0.800" y="4.800" width="6.400" height="5" fill="#333"/><rect x="1.800" y="6.600" width="4.400" height="1" fill="#ccc"/></svg>
<svg style="left:373.6px;top:761px;" width="12.6" height="12.6" viewBox="0 0 12.6 12.6"><rect x="0.600" y="0.600" width="11.200" height="11.200" fill="#dcdcdc" stroke="#222" stroke-width="1.1"/><circle cx="6.200" cy="6.200" r="1.700" fill="none" stroke="#222" stroke-width="1.1"/><path d="M6.200 2.400v1.600M6.200 8.400v1.600" stroke="#222" stroke-width="0.8"/></svg>
<span class="t" style="left:391.40px;top:763.10px;font-size:9.4px;line-height:9.4px;height:9.4px;color:#2a2a2a;transform:scaleX(0.9458);">X:</span>
<div class="sunk" style="left:401px;top:759.6px;width:45.6px;height:15.8px;background:#dedede;"></div>
<span class="t" style="left:457.60px;top:763.10px;font-size:9.4px;line-height:9.4px;height:9.4px;color:#2a2a2a;">Y:</span>
<div class="sunk" style="left:467px;top:759.6px;width:45.6px;height:15.8px;background:#dedede;"></div>
<span class="t" style="left:523.60px;top:763.10px;font-size:9.4px;line-height:9.4px;height:9.4px;color:#2a2a2a;transform:scaleX(1.0056);">Z:</span>
<div class="sunk" style="left:533px;top:759.6px;width:45.6px;height:15.8px;background:#dedede;"></div>
<div class="fld" style="left:590px;top:759.2px;width:78.6px;height:16.6px;"></div>
<span class="t" style="left:594.60px;top:763.10px;font-size:9.4px;line-height:9.4px;height:9.4px;color:#1a1a1a;transform:scaleX(0.8741);">Grid = 0.0mm</span>
<div class="fld" style="left:590px;top:778.6px;width:78.6px;height:17.4px;"></div>
<span class="t" style="left:594.40px;top:783.30px;font-size:9.4px;line-height:9.4px;height:9.4px;color:#1a1a1a;transform:scaleX(0.9528);">Add Time Tag</span>
<div class="btn" style="left:671.4px;top:757.8px;width:34.4px;height:35.6px;"></div>
<svg style="left:678.4px;top:771.4px;" width="20" height="9.6" viewBox="0 0 20 9.6"><circle cx="3.800" cy="4.600" r="2.700" fill="none" stroke="#111" stroke-width="1.600"/><path d="M6.400 4.600H19" stroke="#111" stroke-width="2"/><path d="M13.600 5v3.200M16.400 5v3.600" stroke="#111" stroke-width="1.700"/></svg>
<div class="btn" style="left:708.4px;top:758.8px;width:38.6px;height:16.8px;"></div>
<span class="t" style="left:710.50px;top:762.70px;font-size:9.4px;line-height:9.4px;height:9.4px;color:#1a1a1a;transform:scaleX(0.9070);">Auto Key</span>
<div class="btn" style="left:708.4px;top:777px;width:38.6px;height:16.8px;"></div>
<span class="t" style="left:713.30px;top:780.90px;font-size:9.4px;line-height:9.4px;height:9.4px;color:#1a1a1a;transform:scaleX(0.8809);">Set Key</span>
<div class="sunk" style="left:749.6px;top:759.2px;width:91px;height:15.8px;background:#f4f4f4;"></div>
<div class="dd" style="left:829px;top:761px;width:10.6px;height:12.4px;"></div>
<span class="t" style="left:752.80px;top:762.90px;font-size:9.4px;line-height:9.4px;height:9.4px;color:#111;transform:scaleX(0.9403);">Selected</span>
<svg style="left:751.6px;top:779.6px;" width="13" height="12.4" viewBox="0 0 13 12.4"><path d="M0.6 9.600C3 9.600 3.600 2 6 2S8.600 8 11.600 2.400" fill="none" stroke="#c83a4a" stroke-width="1.100"/><path d="M3.400 0.600V11M0 10.600H9" stroke="#333" stroke-width="0.9"/><path d="M12.600 9.600v2.600h-2.600z" fill="#111"/></svg>
<div class="btn" style="left:771.4px;top:777px;width:69.6px;height:16.8px;"></div>
<span class="t" style="left:783.70px;top:780.90px;font-size:9.4px;line-height:9.4px;height:9.4px;color:#1a1a1a;transform:scaleX(0.8539);">Key Filters...</span>
<svg style="left:0px;top:0px;pointer-events:none;" width="1024" height="796" viewBox="0 0 1024 796"><rect x="848.500" y="763.200" width="1.700" height="7.600" fill="#0c0c0c"/><path d="M855.8 763.3L850.2 767L855.8 770.7Z" fill="#0c0c0c"/><path d="M861.5 763.3L855.9 767L861.5 770.7Z" fill="#0c0c0c"/><path d="M876.4 763.3L870.6 767L876.4 770.7Z" fill="#0c0c0c"/><rect x="876.900" y="763.600" width="1.500" height="6.800" fill="#0c0c0c"/><rect x="879.400" y="763.600" width="1.500" height="6.800" fill="#0c0c0c"/><rect x="888.700" y="761.300" width="11.600" height="11" fill="#d6d6d6" stroke="#0c0c0c" stroke-width="1.500"/><path d="M892.2 763.3L897.8 766.8L892.2 770.3Z" fill="#0c0c0c"/><path d="M902.200 772.600v2h-2z" fill="#0c0c0c"/><rect x="906.800" y="763.600" width="1.500" height="6.800" fill="#0c0c0c"/><rect x="909.300" y="763.600" width="1.500" height="6.800" fill="#0c0c0c"/><path d="M911.4 763.3L917.2 767L911.4 770.7Z" fill="#0c0c0c"/><path d="M926.8 763.3L932.4 767L926.8 770.7Z" fill="#0c0c0c"/><path d="M932.5 763.3L938.1 767L932.5 770.7Z" fill="#0c0c0c"/><rect x="938.200" y="763.200" width="1.700" height="7.600" fill="#0c0c0c"/><rect x="850.700" y="781" width="1.400" height="6.400" fill="#0c0c0c"/><rect x="858.500" y="781" width="1.400" height="6.400" fill="#0c0c0c"/><path d="M855.4 781.5L852.2 784.2L855.4 786.9Z" fill="#0c0c0c"/><path d="M855.2 781.5L858.4 784.2L855.2 786.9Z" fill="#0c0c0c"/></svg>
<div class="sep" style="left:865.2px;top:760.6px;width:1px;height:14px;"></div>
<div class="sep" style="left:923.6px;top:760.6px;width:1px;height:14px;"></div>
<div class="sep" style="left:946.3px;top:760.6px;width:1px;height:14px;"></div>
<div class="sep" style="left:865.2px;top:778.6px;width:1px;height:14px;"></div>
<div class="sep" style="left:927.6px;top:778.6px;width:1px;height:14px;"></div>
<div class="sep" style="left:946.3px;top:778.6px;width:1px;height:14px;"></div>
<div class="sunk" style="left:867.4px;top:777.3px;width:50px;height:15.4px;background:#e6e6e6;"></div>
<span class="t" style="left:871.00px;top:779.50px;font-size:9.4px;line-height:9.4px;height:9.4px;color:#111;">0</span>
<svg style="left:919.6px;top:779.6px;" width="6" height="12.6" viewBox="0 0 6 12.6"><rect x="0.400" y="0.400" width="5.200" height="5.400" fill="#d8d8d8" stroke="#888" stroke-width="0.6"/><rect x="0.400" y="6.600" width="5.200" height="5.400" fill="#d8d8d8" stroke="#888" stroke-width="0.6"/><path d="M1.200 4.200L3 1.600L4.800 4.200ZM1.200 8.200L3 10.800L4.800 8.200Z" fill="#111"/></svg>
<svg style="left:931.4px;top:779px;" width="11.6" height="12.6" viewBox="0 0 11.6 12.6"><rect x="0.600" y="0.600" width="8.400" height="8.400" fill="#eee" stroke="#5a2a2a" stroke-width="1"/><rect x="0.600" y="0.600" width="8.400" height="2.200" fill="#8a3a3a"/><circle cx="7.400" cy="8.400" r="3.400" fill="#f4e8e8" stroke="#b03a3a" stroke-width="1"/><path d="M7.400 6.400V8.600h1.600" fill="none" stroke="#5a2a2a" stroke-width="0.8"/></svg>
<svg style="left:950.4px;top:759.6px;" width="12.4" height="13.6" viewBox="0 0 12.4 13.6"><circle cx="4.600" cy="4.800" r="3.700" fill="#dcdce4" stroke="#2a2a6e" stroke-width="1.500"/><path d="M7.400 7.800L11.400 12.400" stroke="#2a2a6e" stroke-width="2.100"/></svg>
<svg style="left:968px;top:760px;" width="15" height="13.6" viewBox="0 0 15 13.6"><rect x="4" y="0.6" width="9.600" height="9" fill="#ecd8da" stroke="#b85a62" stroke-width="1.100"/><path d="M8.8 0.6v9M4 5.1h9.600" stroke="#b85a62" stroke-width="1.100"/><circle cx="3.800" cy="7.800" r="2.900" fill="#e4e4ee" stroke="#2a2a6e" stroke-width="1.300"/><path d="M6 10L8.600 12.600" stroke="#2a2a6e" stroke-width="1.700"/></svg>
<svg style="left:986.4px;top:759.8px;" width="16" height="14.6" viewBox="0 0 16 14.6"><path d="M0.800 3.600V0.800H3.600M10 0.800H12.800V3.600M12.800 9.400V12.200H10M3.600 12.200H0.800V9.400" fill="none" stroke="#1c1c2c" stroke-width="1.500"/><path d="M2.800 4.600H9V10.600H2.800Z" fill="#d4d4e2" stroke="#2a2a6e" stroke-width="1.200"/><path d="M2.800 4.600L5 2.400H11.200V8.400L9 10.600M9 4.600L11.200 2.400" fill="none" stroke="#2a2a6e" stroke-width="1.100"/><path d="M15 11.600v2.600h-2.600z" fill="#111"/></svg>
<svg style="left:1005px;top:760px;" width="17" height="15" viewBox="0 0 17 15"><rect x="4" y="0.6" width="9.600" height="9" fill="#ecd8da" stroke="#b85a62" stroke-width="1.100"/><path d="M8.8 0.6v9M4 5.1h9.600" stroke="#b85a62" stroke-width="1.100"/><path d="M0.800 6.600H6V12H0.800Z" fill="#d4d4e6" stroke="#2a2a6e" stroke-width="1.200"/><path d="M0.800 6.600L2.600 4.800H7.800V10.200L6 12M6 6.600L7.800 4.800" fill="none" stroke="#2a2a6e" stroke-width="1"/><path d="M15.400 12v2.400h-2.400z" fill="#111"/></svg>
<svg style="left:949.6px;top:777.6px;" width="14" height="13.6" viewBox="0 0 14 13.6"><rect x="0.900" y="0.900" width="11.800" height="11.600" fill="#d8d8dc" stroke="#1c1c1c" stroke-width="1.300" stroke-dasharray="2.200 1.200"/><circle cx="5.600" cy="5.600" r="2.900" fill="#e8e8f0" stroke="#2a2a6e" stroke-width="1.300"/><path d="M7.800 7.800L10.800 10.800" stroke="#2a2a6e" stroke-width="1.900"/></svg>
<svg style="left:968px;top:777.4px;" width="14.6" height="14" viewBox="0 0 14.6 14"><path d="M2.600 6.600L1 5C0.400 4 1.600 3 2.600 4L4.600 6V2.400C4.600 1.200 6.200 1.200 6.200 2.400V1.600C6.200 0.400 8 0.400 8 1.600V2.200C8 1 9.800 1 9.800 2.200V3.600C9.800 2.400 11.400 2.600 11.400 3.800V8.600L9.600 13H4.600Z" fill="#f2f2f2" stroke="#2c2c2c" stroke-width="1" stroke-linejoin="round"/><path d="M6.200 2.400V6M8 2.200V6M9.800 3.600V6.400" stroke="#2c2c2c" stroke-width="0.800"/></svg>
<svg style="left:986.6px;top:777.6px;" width="16" height="15" viewBox="0 0 16 15"><circle cx="6.400" cy="6.800" r="4.300" fill="none" stroke="#1c1c2c" stroke-width="1.300"/><path d="M6.400 0.400V7L2 11.400M6.400 7H11" stroke="#2a2a6e" stroke-width="1.100" fill="none"/><path d="M4.800 2.200L6.400 0L8 2.200ZM10.600 5.400L12.800 7L10.600 8.600ZM0.400 11L2.600 13L0.400 13Z" fill="#1c1c2c"/><path d="M15 12v2.600h-2.600z" fill="#111"/></svg>
<svg style="left:1005.6px;top:777.4px;" width="14" height="14" viewBox="0 0 14 14"><rect x="0.800" y="0.800" width="8.800" height="8.800" fill="#d4d4e2" stroke="#2a2a6e" stroke-width="1.300"/><rect x="6.600" y="7" width="6" height="5.600" fill="#c5c5c5" stroke="#2c2c3c" stroke-width="1.300"/><path d="M3 3L7.600 7.600" stroke="#1c1c2c" stroke-width="1.100"/><circle cx="3.200" cy="3.200" r="1.100" fill="#1c1c2c"/></svg>
<div class="" style="left:878.6px;top:60.8px;width:145.4px;height:696px;background:#c5c5c5;"></div>
<div class="" style="left:880px;top:61px;width:2px;height:693px;background:#9c9c9c;"></div>
<div class="" style="left:882px;top:61px;width:1.2px;height:693px;background:#dedede;"></div>
<div class="" style="left:883px;top:751.6px;width:141px;height:1px;background:#e4e4e4;"></div>
<div class="" style="left:880px;top:753.6px;width:144px;height:1.2px;background:#a2a2a2;"></div>
<div class="" style="left:1021.6px;top:136px;width:1px;height:616px;background:#dcdcdc;"></div>
<div class="" style="left:883.4px;top:63px;width:18px;height:20px;background:#cecece;"></div>
<div class="" style="left:901.7px;top:64px;width:1px;height:19px;background:#8c8c8c;box-shadow:1px 0 0 #e6e6e6;"></div>
<div class="" style="left:924.8px;top:64px;width:1px;height:19px;background:#8c8c8c;box-shadow:1px 0 0 #e6e6e6;"></div>
<div class="" style="left:948.3px;top:64px;width:1px;height:19px;background:#8c8c8c;box-shadow:1px 0 0 #e6e6e6;"></div>
<div class="" style="left:971.4px;top:64px;width:1px;height:19px;background:#8c8c8c;box-shadow:1px 0 0 #e6e6e6;"></div>
<div class="" style="left:994.5px;top:64px;width:1px;height:19px;background:#8c8c8c;box-shadow:1px 0 0 #e6e6e6;"></div>
<div class="" style="left:1018.3px;top:64px;width:1px;height:19px;background:#8c8c8c;box-shadow:1px 0 0 #e6e6e6;"></div>
<svg style="left:881.6px;top:64.6px;" width="20" height="18" viewBox="0 0 20 18"><radialGradient id="stg"><stop offset="0" stop-color="#ffffff"/><stop offset="0.5" stop-color="#f8f8e0" stop-opacity="0.9"/><stop offset="1" stop-color="#f0f0d0" stop-opacity="0"/></radialGradient><circle cx="6" cy="5.600" r="5" fill="url(#stg)"/><path d="M7.400 6.400L8.400 15.600L11 13.400L13.600 16.800L15 15.800L12.600 12.400L15.800 11.600Z" fill="#e8e8e8" stroke="#4a4a4a" stroke-width="1" stroke-linejoin="round"/></svg>
<svg style="left:905px;top:65px;" width="16" height="16" viewBox="0 0 16 16"><path d="M1.600 15.400C1.600 7 6 2 14.400 1.600L14.400 6C8.600 6.400 6 9.600 6 15.400Z" fill="#5c6ea4" stroke="#2c3a6c" stroke-width="1"/><path d="M3.400 15C3.600 8 7 3.600 14 3.200" fill="none" stroke="#c4cce8" stroke-width="1.200"/><circle cx="1.400" cy="1.400" r="0.900" fill="#222"/><circle cx="14.800" cy="14.800" r="0.900" fill="#222"/></svg>
<svg style="left:928px;top:64.6px;" width="18" height="17" viewBox="0 0 18 17"><path d="M9 6V9.600M3 13V9.600H15V13M9 9.600V13" fill="none" stroke="#3c4478" stroke-width="1.100"/><path d="M9 6L3 12M9 6L15 12" stroke="#3c4478" stroke-width="1"/><rect x="6" y="0.800" width="6" height="5.200" fill="#e4e6f4" stroke="#3c4478" stroke-width="1.100"/><rect x="0.800" y="12" width="4.400" height="4" fill="#e4e6f4" stroke="#3c4478" stroke-width="1"/><rect x="6.800" y="12" width="4.400" height="4" fill="#e4e6f4" stroke="#3c4478" stroke-width="1"/><rect x="12.800" y="12" width="4.400" height="4" fill="#e4e6f4" stroke="#3c4478" stroke-width="1"/></svg>
<svg style="left:951px;top:65px;" width="19" height="16.4" viewBox="0 0 19 16.4"><path d="M4.600 3.600C2.600 6 2.600 10.400 4.600 12.800M2.400 5C1.200 7 1.200 9.600 2.400 11.600" fill="none" stroke="#8a8a8a" stroke-width="0.900"/><circle cx="11.400" cy="8.200" r="5.800" fill="#d8d8d8" stroke="#1c1c1c" stroke-width="1.900"/><path d="M11.400 3.600V12.800M6.800 8.200H16M8.200 5L14.600 11.400M14.600 5L8.200 11.400" stroke="#c04a5a" stroke-width="0.800"/><circle cx="11.400" cy="8.200" r="1.200" fill="#1c1c1c"/></svg>
<svg style="left:974.4px;top:64.4px;" width="18" height="17.6" viewBox="0 0 18 17.6"><rect x="0.800" y="0.800" width="16" height="11.600" rx="1" fill="#1c1c1c"/><rect x="2.600" y="2.400" width="12.400" height="8.400" fill="#f4f4f8"/><rect x="4.400" y="3.400" width="3" height="6.400" fill="#3c4ab4"/><path d="M8.600 9.800L10.600 3.400L12.800 9.800Z" fill="#d03a3a"/><path d="M6 13.400h5.600v1.600h-5.600zM3.600 15h10.400v1.600h-10.400z" fill="#2c5a3a"/></svg>
<svg style="left:998px;top:64.4px;" width="16" height="18" viewBox="0 0 16 18"><path d="M1 5.400C3 1.600 9 0.600 14.600 4.600L13 6.600C10 4.600 7 4.400 5.400 5.600L5.600 7.400L3 7.600Z" fill="#2c2c2c"/><path d="M6.800 5.400H9.400L9.600 17H6.600Z" fill="#b04a2c" stroke="#3c1c10" stroke-width="0.600"/><path d="M6.600 12.600h3v4.400h-3z" fill="#1c1c1c"/></svg>
<div class="" style="left:885px;top:90.4px;width:18.4px;height:17px;background:#f0c64e;border-left:1.200px solid #a89868;border-top:1.200px solid #a89868;"></div>
<svg style="left:887.6px;top:92.6px;" width="13" height="13" viewBox="0 0 13 13"><radialGradient id="geo" cx="40%" cy="35%" r="70%"><stop offset="0" stop-color="#e8ecf0"/><stop offset="0.6" stop-color="#6a7680"/><stop offset="1" stop-color="#1c2428"/></radialGradient><circle cx="6.500" cy="6.500" r="5.800" fill="url(#geo)" stroke="#1c1c1c" stroke-width="1"/></svg>
<svg style="left:906.4px;top:92.4px;" width="14" height="14" viewBox="0 0 14 14"><rect x="0.800" y="3" width="6.400" height="6" fill="#e4e4e4" stroke="#555" stroke-width="0.900"/><path d="M6 2.600L9.600 0.800L12.600 5.600" fill="none" stroke="#222" stroke-width="1.100"/><circle cx="8" cy="9" r="3.800" fill="#f4f4f4" stroke="#222" stroke-width="1.300"/><circle cx="8" cy="9" r="1" fill="#222"/></svg>
<svg style="left:925.6px;top:92.4px;" width="14" height="14" viewBox="0 0 14 14"><path d="M1.600 1L6.600 6M4 0.800L6.600 6L1 4" stroke="#222" stroke-width="1.200" fill="none"/><path d="M6 5.600L12.600 12.600L10 13.400L5.600 7.600Z" fill="#e8e060" stroke="#8a8430" stroke-width="0.600"/><path d="M6.600 6L11.600 8" stroke="#333" stroke-width="0.900"/></svg>
<svg style="left:944px;top:92.6px;" width="15" height="13" viewBox="0 0 15 13"><circle cx="4" cy="3" r="2.400" fill="#eee" stroke="#111" stroke-width="1.300"/><circle cx="9.600" cy="3" r="2.400" fill="#eee" stroke="#111" stroke-width="1.300"/><rect x="1.600" y="5.400" width="10" height="6.400" fill="#1c1c1c"/><path d="M11.600 7.400L14.600 6V11.400L11.600 10Z" fill="#1c1c1c"/><rect x="3.600" y="7.600" width="5" height="2" fill="#ddd"/></svg>
<svg style="left:963.6px;top:94px;" width="14" height="11.6" viewBox="0 0 14 11.6"><rect x="0.800" y="0.800" width="9.600" height="8.400" fill="#ecd8dc" stroke="#9a8a90" stroke-width="1"/><rect x="3" y="2.400" width="5.400" height="5" fill="#f8f0f2" stroke="#c4a4ac" stroke-width="0.700"/><path d="M10 10.400h3.400" stroke="#8a5a64" stroke-width="1.200"/></svg>
<svg style="left:982.8px;top:93.4px;" width="15" height="12" viewBox="0 0 15 12"><path d="M0.800 3C2.600 0.6 4 0.6 5.800 3S9 5.2 10.600 3S13.200 1 14.400 1.6" fill="none" stroke="#3c5ca4" stroke-width="1"/><path d="M0.800 6.4C2.600 4 4 4 5.800 6.4S9 8.6 10.600 6.4S13.200 4.4 14.400 5" fill="none" stroke="#3c5ca4" stroke-width="1"/><path d="M0.800 9.8C2.600 7.4 4 7.4 5.800 9.8S9 12 10.600 9.8S13.200 7.8 14.400 8.4" fill="none" stroke="#3c5ca4" stroke-width="1"/></svg>
<svg style="left:1002.6px;top:92px;" width="14" height="15" viewBox="0 0 14 15"><circle cx="4.400" cy="4.400" r="2.600" fill="none" stroke="#222" stroke-width="1.900" stroke-dasharray="1.300 0.900"/><circle cx="9" cy="10" r="3.400" fill="none" stroke="#222" stroke-width="2.300" stroke-dasharray="1.500 1"/><circle cx="9" cy="10" r="1" fill="#222"/></svg>
<div class="sunk" style="left:894.8px;top:113.8px;width:112px;height:15.4px;background:#e8e8e8;"></div>
<div class="dd" style="left:995px;top:115.6px;width:10.6px;height:12.2px;"></div>
<span class="t" style="left:897.60px;top:117.30px;font-size:9.4px;line-height:9.4px;height:9.4px;color:#111;transform:scaleX(0.8908);">Standard Primitives</span>
<div class="" style="left:880.6px;top:135.4px;width:140px;height:1px;background:#8e8e8e;box-shadow:0 1px 0 #e6e6e6;"></div>
<div class="" style="left:883.4px;top:146px;width:131.6px;height:107px;border:1px solid #8e8e8e;box-shadow:inset 1px 1px 0 #e6e6e6,1px 1px 0 #e6e6e6;"></div>
<div class="" style="left:883.4px;top:266px;width:131.6px;height:32px;border:1px solid #8e8e8e;box-shadow:inset 1px 1px 0 #e6e6e6,1px 1px 0 #e6e6e6;"></div>
<div class="" style="left:886px;top:139.4px;width:126.8px;height:12.4px;background:#b2b2b2;border:1.200px solid #3c3c3c;"></div><span class="t" style="left:891.00px;top:140.60px;font-size:10px;line-height:10px;height:10px;color:#111;">-</span><span class="t" style="left:926.40px;top:141.10px;font-size:9.4px;line-height:9.4px;height:9.4px;color:#111;transform:scaleX(0.9202);">Object Type</span>
<div class="" style="left:886px;top:259.4px;width:126.8px;height:12.4px;background:#b2b2b2;border:1.200px solid #3c3c3c;"></div><span class="t" style="left:891.00px;top:260.60px;font-size:10px;line-height:10px;height:10px;color:#111;">-</span><span class="t" style="left:918.40px;top:261.10px;font-size:9.4px;line-height:9.4px;height:9.4px;color:#111;transform:scaleX(0.9058);">Name and Color</span>
<span class="t" style="left:927.00px;top:155.70px;font-size:9.4px;line-height:9.4px;height:9.4px;color:#8c8c8c;transform:scaleX(0.9058);text-shadow:0.6px 0.6px 0 #e8e8e8;">AutoGrid</span>
<div class="" style="left:970.4px;top:155.2px;width:9.6px;height:9.4px;background:#c5c5c5;border-top:1.400px solid #666;border-left:1.400px solid #666;border-bottom:1px solid #eee;border-right:1px solid #eee;"></div>
<div class="btn" style="left:891.6px;top:168.3px;width:54.6px;height:14.2px;"></div>
<div class="btn" style="left:953.8px;top:168.3px;width:54.8px;height:14.2px;"></div>
<span class="t" style="left:911.30px;top:170.60px;font-size:9.4px;line-height:9.4px;height:9.4px;color:#111;transform:scaleX(0.9260);">Box</span>
<span class="t" style="left:971.00px;top:170.60px;font-size:9.4px;line-height:9.4px;height:9.4px;color:#111;transform:scaleX(0.9078);">Cone</span>
<div class="btn" style="left:891.6px;top:185.3px;width:54.6px;height:14.2px;"></div>
<div class="btn" style="left:953.8px;top:185.3px;width:54.8px;height:14.2px;"></div>
<span class="t" style="left:905.10px;top:187.60px;font-size:9.4px;line-height:9.4px;height:9.4px;color:#111;transform:scaleX(0.9039);">Sphere</span>
<span class="t" style="left:959.40px;top:187.60px;font-size:9.4px;line-height:9.4px;height:9.4px;color:#111;transform:scaleX(0.9068);">GeoSphere</span>
<div class="btn" style="left:891.6px;top:202.3px;width:54.6px;height:14.2px;"></div>
<div class="btn" style="left:953.8px;top:202.3px;width:54.8px;height:14.2px;"></div>
<span class="t" style="left:903.60px;top:204.60px;font-size:9.4px;line-height:9.4px;height:9.4px;color:#111;transform:scaleX(0.8817);">Cylinder</span>
<span class="t" style="left:971.40px;top:204.60px;font-size:9.4px;line-height:9.4px;height:9.4px;color:#111;transform:scaleX(0.9299);">Tube</span>
<div class="btn" style="left:891.6px;top:219.3px;width:54.6px;height:14.2px;"></div>
<div class="btn" style="left:953.8px;top:219.3px;width:54.8px;height:14.2px;"></div>
<span class="t" style="left:907.30px;top:221.60px;font-size:9.4px;line-height:9.4px;height:9.4px;color:#111;">Torus</span>
<span class="t" style="left:965.90px;top:221.60px;font-size:9.4px;line-height:9.4px;height:9.4px;color:#111;transform:scaleX(0.8876);">Pyramid</span>
<div class="btn" style="left:891.6px;top:236.3px;width:54.6px;height:14.2px;"></div>
<div class="btn" style="left:953.8px;top:236.3px;width:54.8px;height:14.2px;"></div>
<span class="t" style="left:905.30px;top:238.60px;font-size:9.4px;line-height:9.4px;height:9.4px;color:#111;transform:scaleX(0.9566);">Teapot</span>
<span class="t" style="left:970.70px;top:238.60px;font-size:9.4px;line-height:9.4px;height:9.4px;color:#111;transform:scaleX(0.8734);">Plane</span>
<div class="sunk" style="left:890px;top:277.4px;width:104px;height:15.2px;background:#e4e4e4;"></div>
<div class="" style="left:998px;top:278px;width:12.6px;height:14.4px;background:#a0103e;border:1px solid #6c0a2a;"></div>
</div></body></html>
